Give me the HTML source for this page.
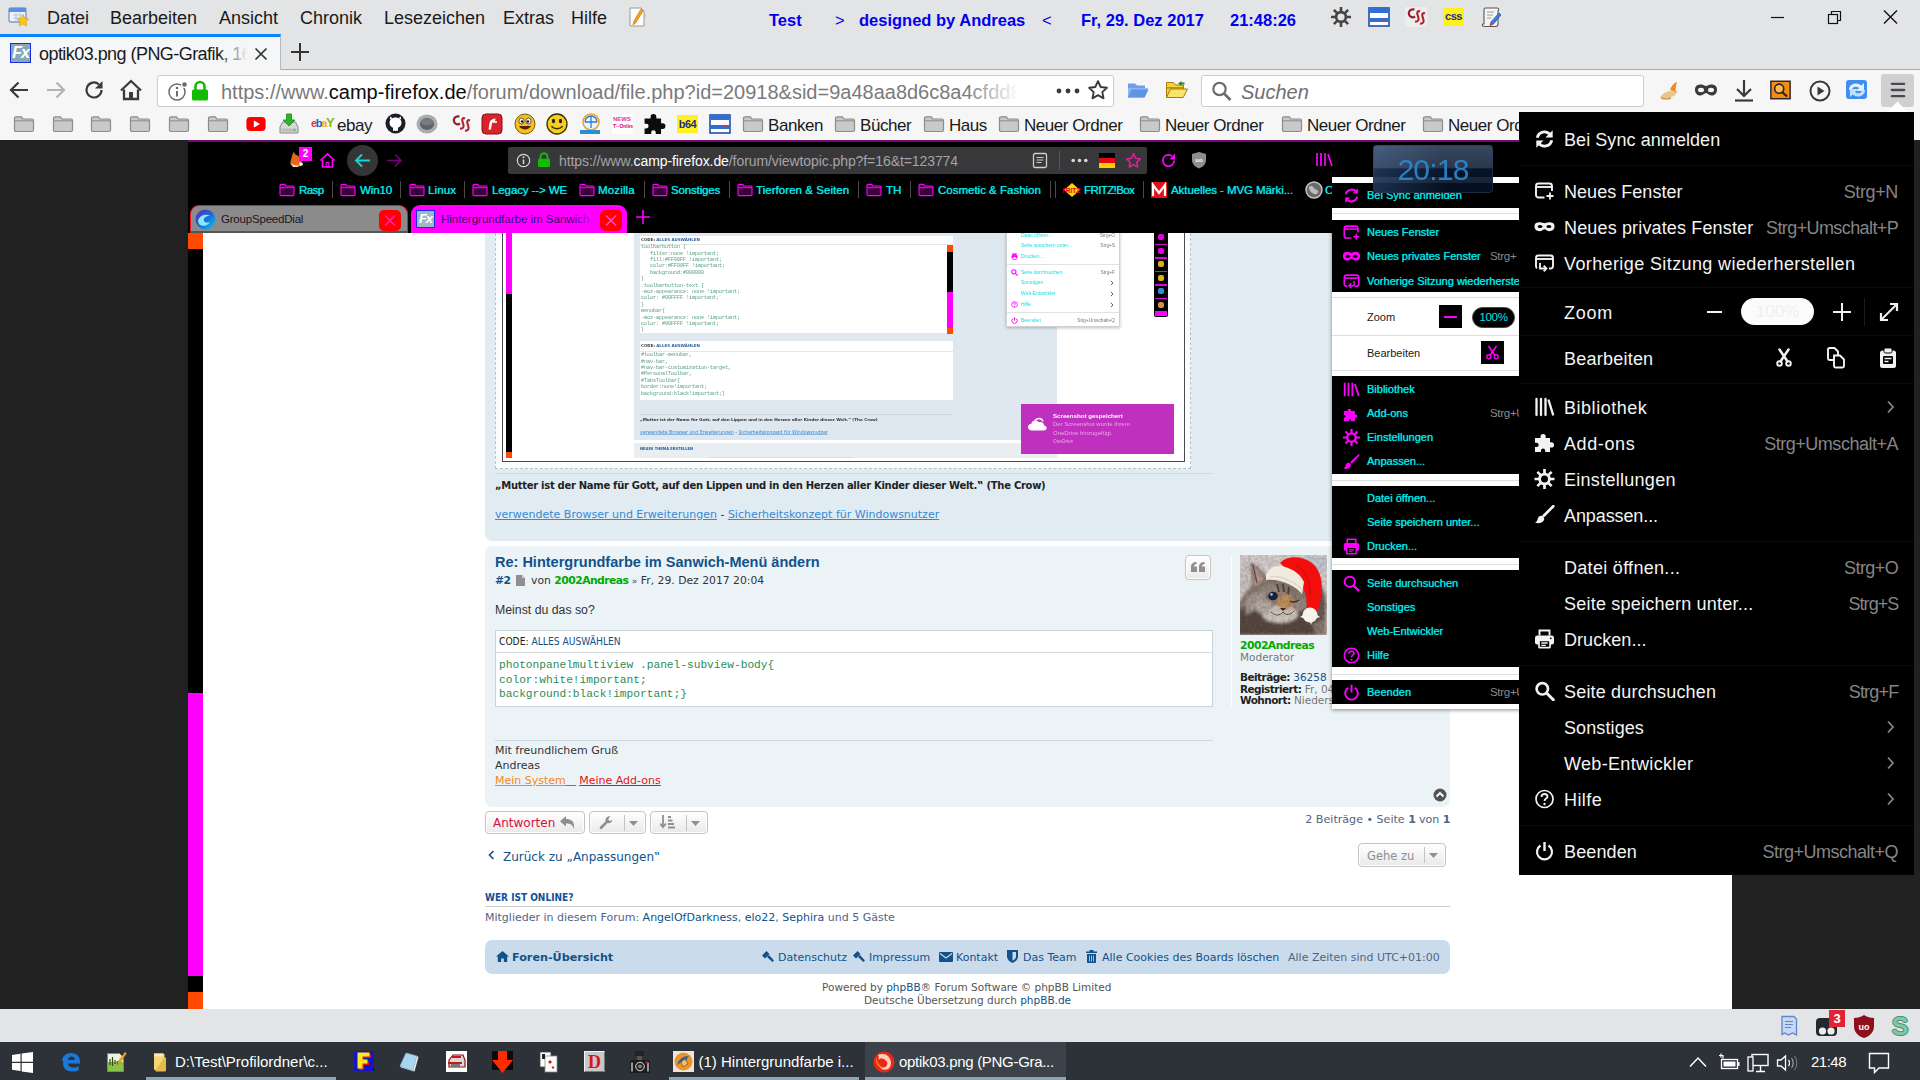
<!DOCTYPE html>
<html lang="de"><head><meta charset="utf-8"><title>optik03.png</title>
<style>
*{box-sizing:border-box;margin:0;padding:0}
html,body{width:1920px;height:1080px;overflow:hidden;background:#212121;font-family:"Liberation Sans",sans-serif;}
.abs{position:absolute}
#root{position:absolute;left:0;top:0;width:1920px;height:1080px;overflow:hidden}
#menubar{position:absolute;left:0;top:0;width:1920px;height:70px;background:#e3e4e6}
#menubar .mi{position:absolute;top:7px;font-size:18px;color:#1a1a1a;line-height:22px;white-space:nowrap}
#menubar .bl{position:absolute;top:9px;font-size:16.500px;font-weight:bold;color:#0000f0;line-height:22px;white-space:nowrap}
#tab{position:absolute;left:0;top:34px;width:281px;height:36px;background:#f5f6f7;border-top:3px solid #0a84ff;border-right:1px solid #b9b9bb}
#tabline{position:absolute;left:281px;top:69px;width:1639px;height:1px;background:#a9a9ab}
#navbar{position:absolute;left:0;top:70px;width:1920px;height:70px;background:#f6f6f7}
.box{position:absolute;background:#fff;border:1px solid #cdcdcf;border-radius:3px}
.bm{position:absolute;top:114px;font-size:17px;letter-spacing:-.45px;line-height:22px;color:#1a1a1a;white-space:nowrap}
#content{position:absolute;left:0;top:140px;width:1920px;height:869px;background:#212121}
#img{position:absolute;left:188px;top:140px;width:1544px;height:869px;background:#fff;overflow:hidden}
#addonbar{position:absolute;left:0;top:1009px;width:1920px;height:33px;background:#e3e4e6}
#taskbar{position:absolute;left:0;top:1042px;width:1920px;height:38px;background:#2c3237}
#taskbar svg{margin-top:1px}
#popup{position:absolute;left:1519px;top:112px;width:395px;height:763px;background:#000}
</style></head><body><div id="root">
<div id="menubar">
<svg class="abs" style="left:8px;top:7px" width="22" height="20" viewBox="0 0 22 20"><rect x="1" y="1" width="17" height="14" rx="1.5" fill="#eef3fb" stroke="#7d9bd0" stroke-width="1.4"/><rect x="1" y="1" width="17" height="4" fill="#5b8fe0"/><path d="M5 8h10M5 11h10M8 6v8M12 6v8" stroke="#b9c6dc" stroke-width="1"/><path d="M15 7.5l1.9 3.9 4.1.5-3 2.9.8 4.2-3.8-2-3.8 2 .8-4.2-3-2.9 4.1-.5z" fill="#f7c71d" stroke="#e09a10" stroke-width=".6"/></svg>
<span class="mi" style="left:47px">Datei</span>
<span class="mi" style="left:110px">Bearbeiten</span>
<span class="mi" style="left:219px">Ansicht</span>
<span class="mi" style="left:300px">Chronik</span>
<span class="mi" style="left:384px">Lesezeichen</span>
<span class="mi" style="left:503px">Extras</span>
<span class="mi" style="left:571px">Hilfe</span>
<svg class="abs" style="left:627px;top:6px" width="22" height="22" viewBox="0 0 22 22"><path d="M3 2h11l3 3v15H3z" fill="#fbfbfb" stroke="#9a9a9a" stroke-width="1"/><path d="M14 3L7 15l-1 4 3-2.500L16 5z" fill="#f5a21a" stroke="#c47a0a" stroke-width=".7"/><path d="M17 8c2 .5 2 2.500 .5 3" stroke="#bbb" fill="none"/></svg>
<span class="bl" style="left:769px">Test</span>
<span class="bl" style="left:835px;font-weight:normal">&gt;</span>
<span class="bl" style="left:859px">designed by Andreas</span>
<span class="bl" style="left:1042px;font-weight:normal">&lt;</span>
<span class="bl" style="left:1081px">Fr, 29. Dez 2017</span>
<span class="bl" style="left:1230px">21:48:26</span>
<svg class="abs" style="left:1330px;top:6px" width="22" height="22" viewBox="0 0 22 22"><g stroke="#444" stroke-width="2.600" stroke-linecap="butt"><path d="M11 1v20M1 11h20M3.900 3.900l14.200 14.200M18.100 3.900L3.900 18.100"/></g><circle cx="11" cy="11" r="6.200" fill="#444"/><circle cx="11" cy="11" r="3.600" fill="#e3e4e6"/></svg>
<svg class="abs" style="left:1368px;top:7px" width="22" height="20" viewBox="0 0 22 20"><rect x="1" y="1" width="20" height="18" fill="#fff" stroke="#1f4fa8" stroke-width="1.600"/><rect x="1" y="1" width="20" height="5" fill="#2f6fd6"/><rect x="1" y="11" width="20" height="4" fill="#2f6fd6"/><path d="M14 13h4" stroke="#e33" stroke-width="1.400"/></svg>
<svg class="abs" style="left:1405px;top:6px" width="22" height="22" viewBox="0 0 22 22"><rect x="0" y="1" width="22" height="20" fill="#ededed"/><path d="M9.500 3.500C5.500 2.500 3 5.500 4 8.500c1 3 4 3.500 6 2" fill="none" stroke="#9b1c2e" stroke-width="2.300"/><path d="M15 5.500c-2-1-3.500.5-2.500 3l1 3.500c.5 2.500-1 4-3.500 3.500M20 7.500c-2-1-3.500.5-2.500 3l1 3.500c.5 2.500-1 4-3.500 3.500" fill="none" stroke="#b0212f" stroke-width="2.100"/></svg>
<div class="abs" style="left:1443px;top:8px;width:21px;height:18px;background:#fff21c;font-size:11px;font-weight:bold;line-height:16px;text-align:center;color:#1f2a8a;letter-spacing:-.5px">css</div>
<svg class="abs" style="left:1480px;top:6px" width="23" height="22" viewBox="0 0 23 22"><path d="M5 2h12c2 0 2 2 1 3v13c0 2-1 2.500-2 2.500H4c-2 0-2-2-1-2.500h1V4c0-1 0-2 1-2z" fill="#f4f4f4" stroke="#555" stroke-width="1.100"/><path d="M7 6h7M7 9h6M7 12h4" stroke="#999" stroke-width="1"/><path d="M19 7l-8 9-1 3.500 3.300-1.300L21 9z" fill="#3b7de0" stroke="#23479a" stroke-width=".7"/><path d="M10 19.500l1-3.500 2.300 2.200z" fill="#e63b2e"/></svg>
<svg class="abs" style="left:1770px;top:9px" width="130" height="18" viewBox="0 0 130 18"><path d="M1 8.500h13" stroke="#111" stroke-width="1.200"/><rect x="58.500" y="5.500" width="9" height="9" fill="none" stroke="#111" stroke-width="1.200"/><path d="M61.500 5.500v-3h9v9h-3" fill="none" stroke="#111" stroke-width="1.200"/><path d="M114 1.500l13 13M127 1.500l-13 13" stroke="#111" stroke-width="1.400"/></svg>
</div>
<div id="tab">
<div class="abs" style="left:10px;top:6px;width:21px;height:20px;background:#86a9b4;border:1.500px solid #1a2be0;color:#fff;font-size:16px;font-style:italic;font-weight:bold;line-height:17px;text-align:center;letter-spacing:-1px;overflow:hidden">Fx</div>
<div class="abs" style="left:39px;top:5px;width:212px;height:24px;overflow:hidden;white-space:nowrap;font-size:18px;letter-spacing:-.55px;line-height:24px;color:#1a1a1a">optik03.png (PNG-Grafik, 1600</div>
<div class="abs" style="left:218px;top:5px;width:33px;height:24px;background:linear-gradient(90deg,rgba(245,246,247,0),#f5f6f7 90%)"></div>
<svg class="abs" style="left:254px;top:10px" width="14" height="14" viewBox="0 0 14 14"><path d="M1.500 1.500l11 11M12.500 1.500l-11 11" stroke="#333" stroke-width="1.700"/></svg>
</div>
<svg class="abs" style="left:290px;top:42px" width="20" height="20" viewBox="0 0 20 20"><path d="M10 1v18M1 10h18" stroke="#333" stroke-width="2"/></svg>
<div id="tabline"></div>
<div id="navbar">
<svg class="abs" style="left:8px;top:9px" width="22" height="22" viewBox="0 0 22 22"><path d="M20 11H3M10.500 3.500L3 11l7.500 7.500" fill="none" stroke="#3a3a3c" stroke-width="2.200"/></svg>
<svg class="abs" style="left:45px;top:9px" width="22" height="22" viewBox="0 0 22 22"><path d="M2 11h17M11.500 3.500L19 11l-7.500 7.500" fill="none" stroke="#b3b3b5" stroke-width="2.200"/></svg>
<svg class="abs" style="left:83px;top:9px" width="22" height="22" viewBox="0 0 22 22"><path d="M18.500 11a7.500 7.500 0 1 1-2.600-5.700" fill="none" stroke="#3a3a3c" stroke-width="2.200"/><path d="M19.500 2v7.500H12z" fill="#3a3a3c"/></svg>
<svg class="abs" style="left:119px;top:8px" width="24" height="24" viewBox="0 0 24 24"><path d="M2 12.500L12 3l10 9.500" fill="none" stroke="#3a3a3c" stroke-width="2.300"/><path d="M5 11.500V21h14v-9.500" fill="none" stroke="#3a3a3c" stroke-width="2.300"/><rect x="10" y="14" width="4" height="7" fill="#3a3a3c"/></svg>
<div class="box" style="left:157px;top:5px;width:957px;height:32px"></div>
<svg class="abs" style="left:167px;top:10px" width="22" height="22" viewBox="0 0 22 22"><circle cx="10" cy="12" r="8" fill="none" stroke="#6b6b6d" stroke-width="1.500"/><path d="M10 11v5.500" stroke="#6b6b6d" stroke-width="2"/><circle cx="10" cy="8" r="1.300" fill="#6b6b6d"/><circle cx="17.500" cy="4.500" r="3.500" fill="#fff"/><circle cx="17.500" cy="4.500" r="2.300" fill="#6b6b6d"/></svg>
<svg class="abs" style="left:191px;top:10px" width="18" height="22" viewBox="0 0 18 22"><path d="M4.500 10V6.500a4.500 4.500 0 0 1 9 0V10" fill="none" stroke="#12bc00" stroke-width="2.600"/><rect x="1" y="9.500" width="16" height="11" rx="1.500" fill="#12bc00"/></svg>
<div class="abs" style="left:221px;top:8px;width:800px;height:28px;overflow:hidden;white-space:nowrap;font-size:20px;line-height:28px;color:#7a7a7c">https://www.<span style="color:#0c0c0d">camp-firefox.de</span>/forum/download/file.php?id=20918&amp;sid=9a48aa8d6c8a4cfdd8ab</div>
<div class="abs" style="left:965px;top:8px;width:75px;height:28px;background:linear-gradient(90deg,rgba(255,255,255,0),#fff 72%)"></div>
<svg class="abs" style="left:1056px;top:18px" width="24" height="6" viewBox="0 0 24 6"><circle cx="3" cy="3" r="2.400" fill="#3a3a3c"/><circle cx="12" cy="3" r="2.400" fill="#3a3a3c"/><circle cx="21" cy="3" r="2.400" fill="#3a3a3c"/></svg>
<svg class="abs" style="left:1087px;top:9px" width="22" height="22" viewBox="0 0 22 22"><path d="M11 2.200l2.700 5.800 6.200.8-4.600 4.300 1.200 6.200-5.500-3.100-5.500 3.100 1.200-6.200L2.100 8.800l6.200-.8z" fill="none" stroke="#3a3a3c" stroke-width="1.900" stroke-linejoin="round"/></svg>
<svg class="abs" style="left:1127px;top:11px" width="22" height="18" viewBox="0 0 22 18"><path d="M1 2.500h7l2 2h8v3H1z" fill="#6f9fe6"/><path d="M1 16.500V7h17l3 0-3.500 9.500z" fill="#8fb8f3"/><path d="M1 16.500l3.500-8h17l-3.800 8z" fill="#5e93e6"/></svg>
<svg class="abs" style="left:1165px;top:10px" width="23" height="20" viewBox="0 0 23 20"><path d="M1.500 2.500h7l2 2.500h8v3h-17z" fill="#f6d23c" stroke="#a77c0c" stroke-width="1"/><path d="M1.500 17.500V8h17v2" fill="#f6d23c" stroke="#a77c0c" stroke-width="1"/><path d="M1.500 17.500l4-8.500h17l-4.300 8.500z" fill="#fbe36a" stroke="#a77c0c" stroke-width="1"/><path d="M13 3.500l3.500-2.500v1.600h3v1.800h-3v1.600z" fill="#2a8a2a"/></svg>
<div class="box" style="left:1201px;top:5px;width:443px;height:32px"></div>
<svg class="abs" style="left:1210px;top:10px" width="24" height="24" viewBox="0 0 24 24"><circle cx="9.500" cy="9" r="6.200" fill="none" stroke="#6d6d6f" stroke-width="2.200"/><path d="M14 13.500l6.500 6.500" stroke="#6d6d6f" stroke-width="2.600"/></svg>
<div class="abs" style="left:1241px;top:8px;font-size:20px;line-height:28px;font-style:italic;color:#6f6f71">Suchen</div>
<svg class="abs" style="left:1658px;top:10px" width="24" height="22" viewBox="0 0 24 22"><path d="M2 17c3-4 7-6 10-6s5 1 8 0c-2 4-6 7-11 7-3 0-5 0-7-1z" fill="#e9c58a"/><path d="M12 10c1-4 4-7 7-8-1 4-2 7-1 10z" fill="#f08a24"/><path d="M3 18c3 1 7 1 10 0" stroke="#c79a54" stroke-width="1.400" fill="none"/></svg>
<svg class="abs" style="left:1694px;top:13px" width="24" height="14" viewBox="0 0 24 14"><path d="M1 6.500C1 2.500 4 1.500 7 1.500c2.500 0 3.500 1.500 5 1.500s2.500-1.500 5-1.500c3 0 6 1 6 5s-2.500 6-5.500 6c-2.800 0-3.800-2.500-5.500-2.500S9.300 12.500 6.500 12.500C3.500 12.500 1 10.500 1 6.500z" fill="#3a3a3c"/><ellipse cx="7" cy="7" rx="3" ry="2.200" fill="#f6f6f7"/><ellipse cx="17" cy="7" rx="3" ry="2.200" fill="#f6f6f7"/></svg>
<svg class="abs" style="left:1733px;top:9px" width="22" height="24" viewBox="0 0 22 24"><path d="M11 1v15M4 10l7 7 7-7" fill="none" stroke="#3a3a3c" stroke-width="2.200"/><path d="M2 21.500h18" stroke="#3a3a3c" stroke-width="2.200"/></svg>
<svg class="abs" style="left:1770px;top:10px" width="21" height="20" viewBox="0 0 24 22"><rect x="1" y="1" width="22" height="20" fill="#f68a12" stroke="#222" stroke-width="1.600"/><circle cx="10.500" cy="9.500" r="5.200" fill="#ffb84d" stroke="#222" stroke-width="1.800"/><path d="M14 13.500l5.500 5" stroke="#222" stroke-width="2.400"/></svg>
<svg class="abs" style="left:1808px;top:9px" width="24" height="24" viewBox="0 0 24 24"><circle cx="12" cy="12" r="9.500" fill="none" stroke="#3a3a3c" stroke-width="2"/><path d="M9.500 7.500v9l7-4.500z" fill="#3a3a3c"/></svg>
<svg class="abs" style="left:1844px;top:8px" width="26" height="24" viewBox="0 0 26 24"><rect x="2" y="2" width="21" height="19" rx="3" fill="#3f8ff0"/><path d="M5 12c0-4 3-6.500 7-6.500 2 0 4 .7 5.300 2L20 5v8h-8l3-3c-1-.8-2-1.200-3.300-1.200C9.500 8.800 8 10.300 8 12z" fill="#dff0ff"/><path d="M21 12c0 4-3 6.500-7 6.500-2 0-4-.7-5.300-2L6 19v-8h8l-3 3c1 .8 2 1.200 3.300 1.200 2.200 0 3.700-1.500 3.700-3.200z" fill="#bfe0ff"/></svg>
<div class="abs" style="left:1881px;top:4px;width:33px;height:33px;background:#d0d0d2;border-radius:3px"></div>
<svg class="abs" style="left:1888px;top:10px" width="20" height="20" viewBox="0 0 20 20"><path d="M3.800 3.800h12.400M3.800 10h12.400M3.800 16.200h12.400" stroke="#4a4a4c" stroke-width="2.300" stroke-linecap="round"/></svg>
<svg class="abs" style="left:1886px;top:30.500px" width="24" height="12" viewBox="0 0 24 12"><path d="M0.500 12L11.500 0.500l11 11.500z" fill="#fff"/></svg>
<svg class="abs" style="left:13px;top:45px" width="22" height="18" viewBox="0 0 22 18"><path d="M1.500 3.500c0-1 .6-1.700 1.600-1.700h5.300l1.500 2.200h9c1 0 1.600.7 1.600 1.700v9.100c0 1-.6 1.700-1.600 1.700H3.100c-1 0-1.600-.7-1.600-1.700z" fill="#c9c9c9" stroke="#8c8c8c" stroke-width="1.200"/><path d="M1.500 5.800h19" stroke="#8c8c8c" stroke-width="1"/></svg>
<svg class="abs" style="left:52px;top:45px" width="22" height="18" viewBox="0 0 22 18"><path d="M1.500 3.500c0-1 .6-1.700 1.600-1.700h5.300l1.500 2.200h9c1 0 1.600.7 1.600 1.700v9.100c0 1-.6 1.700-1.600 1.700H3.100c-1 0-1.600-.7-1.600-1.700z" fill="#c9c9c9" stroke="#8c8c8c" stroke-width="1.200"/><path d="M1.500 5.800h19" stroke="#8c8c8c" stroke-width="1"/></svg>
<svg class="abs" style="left:90px;top:45px" width="22" height="18" viewBox="0 0 22 18"><path d="M1.500 3.500c0-1 .6-1.700 1.600-1.700h5.300l1.500 2.200h9c1 0 1.600.7 1.600 1.700v9.100c0 1-.6 1.700-1.600 1.700H3.100c-1 0-1.600-.7-1.600-1.700z" fill="#c9c9c9" stroke="#8c8c8c" stroke-width="1.200"/><path d="M1.500 5.800h19" stroke="#8c8c8c" stroke-width="1"/></svg>
<svg class="abs" style="left:129px;top:45px" width="22" height="18" viewBox="0 0 22 18"><path d="M1.500 3.500c0-1 .6-1.700 1.600-1.700h5.300l1.500 2.200h9c1 0 1.600.7 1.600 1.700v9.100c0 1-.6 1.700-1.600 1.700H3.100c-1 0-1.600-.7-1.600-1.700z" fill="#c9c9c9" stroke="#8c8c8c" stroke-width="1.200"/><path d="M1.500 5.800h19" stroke="#8c8c8c" stroke-width="1"/></svg>
<svg class="abs" style="left:168px;top:45px" width="22" height="18" viewBox="0 0 22 18"><path d="M1.500 3.500c0-1 .6-1.700 1.600-1.700h5.300l1.500 2.200h9c1 0 1.600.7 1.600 1.700v9.100c0 1-.6 1.700-1.600 1.700H3.100c-1 0-1.600-.7-1.600-1.700z" fill="#c9c9c9" stroke="#8c8c8c" stroke-width="1.200"/><path d="M1.500 5.800h19" stroke="#8c8c8c" stroke-width="1"/></svg>
<svg class="abs" style="left:207px;top:45px" width="22" height="18" viewBox="0 0 22 18"><path d="M1.500 3.500c0-1 .6-1.700 1.600-1.700h5.300l1.500 2.200h9c1 0 1.600.7 1.600 1.700v9.100c0 1-.6 1.700-1.600 1.700H3.100c-1 0-1.600-.7-1.600-1.700z" fill="#c9c9c9" stroke="#8c8c8c" stroke-width="1.200"/><path d="M1.500 5.800h19" stroke="#8c8c8c" stroke-width="1"/></svg>
<svg class="abs" style="left:246px;top:47px" width="20" height="14" viewBox="0 0 22 16"><rect x="0" y="0" width="22" height="16" rx="4.500" fill="#f00"/><path d="M8.500 4v8l7-4z" fill="#fff"/></svg>
<svg class="abs" style="left:278px;top:43px" width="22" height="22" viewBox="0 0 22 22"><path d="M2 14l2.500-5h13L20 14v6H2z" fill="#d8d8d8" stroke="#8a8a8a" stroke-width="1"/><rect x="3.500" y="15.500" width="15" height="3" fill="#bdbdbd"/><circle cx="16.500" cy="17" r="1" fill="#3c3"/><path d="M8.500 1h5v6h3.500L11 13 5 7h3.500z" fill="#2db52d" stroke="#178a17" stroke-width=".8"/></svg>
<div class="abs" style="left:311px;top:45px;width:24px;height:16px;font-size:11px;font-weight:bold;line-height:16px;letter-spacing:-1.300px;white-space:nowrap"><span style="color:#e53238">e</span><span style="color:#0064d2">b</span><span style="color:#f5af02">a</span><span style="color:#86b817;font-size:13px">Y</span></div>
<span class="bm" style="left:337px;top:45px">ebay</span>
<svg class="abs" style="left:385px;top:43px" width="21" height="21" viewBox="0 0 21 21"><circle cx="10.500" cy="10.500" r="10" fill="#1b1f23"/><path d="M10.500 4.500c-3.600 0-6 2.400-6 5.300 0 2.600 1.700 4.300 3.500 5v2.700c0 .5 5 .5 5 0v-2.700c1.800-.7 3.500-2.400 3.500-5 0-2.900-2.400-5.300-6-5.300z" fill="#fff"/><path d="M4.800 6.500l.3-3 2.700 1.700M16.200 6.500l-.3-3-2.700 1.700" fill="#fff"/></svg>
<svg class="abs" style="left:416px;top:44px" width="22" height="20" viewBox="0 0 22 20"><ellipse cx="11" cy="10" rx="10.500" ry="9.500" fill="#a9acb0"/><ellipse cx="11" cy="10" rx="7" ry="6" fill="#5e6166"/><ellipse cx="11" cy="8" rx="6" ry="3.500" fill="#777b80"/></svg>
<svg class="abs" style="left:450px;top:43px" width="22" height="22" viewBox="0 0 22 22"><path d="M9.500 3.500C5.500 2.500 3 5.500 4 8.500c1 3 4 3.500 6 2" fill="none" stroke="#9b1c2e" stroke-width="2.300"/><path d="M15 5.500c-2-1-3.500.5-2.500 3l1 3.500c.5 2.500-1 4-3.500 3.500M20 7.500c-2-1-3.500.5-2.500 3l1 3.500c.5 2.500-1 4-3.500 3.500" fill="none" stroke="#b0212f" stroke-width="2.100"/></svg>
<svg class="abs" style="left:481px;top:43px" width="22" height="22" viewBox="0 0 22 22"><rect x="1" y="1" width="20" height="20" rx="4" fill="#d8232a" stroke="#8a0f14" stroke-width="1"/><path d="M14.500 5.500c-3 0-5.500 1.500-6 4.500l-1 6.500h2.500l.8-5c.3-2 1.500-3 3.200-3z" fill="#fff"/><path d="M12 9h4" stroke="#fff" stroke-width="1.600"/></svg>
<svg class="abs" style="left:514px;top:43px" width="22" height="22" viewBox="0 0 22 22"><circle cx="11" cy="11" r="10" fill="#f2c21a" stroke="#7a5a00" stroke-width="1"/><ellipse cx="7.500" cy="8" rx="2.600" ry="3" fill="#fff" stroke="#333" stroke-width=".8"/><ellipse cx="14.500" cy="8" rx="2.600" ry="3" fill="#fff" stroke="#333" stroke-width=".8"/><circle cx="8" cy="8.500" r="1.200" fill="#111"/><circle cx="14" cy="8.500" r="1.200" fill="#111"/><path d="M5 13c2 4.500 10 4.500 12 0z" fill="#5a1d0a"/></svg>
<svg class="abs" style="left:546px;top:43px" width="22" height="22" viewBox="0 0 22 22"><circle cx="11" cy="11" r="10" fill="#f5cf1d" stroke="#3b2b00" stroke-width="1.300"/><ellipse cx="7.500" cy="8" rx="1.600" ry="2.300" fill="#222"/><ellipse cx="14.500" cy="8" rx="1.600" ry="2.300" fill="#222"/><path d="M5.500 13c2 3.500 9 3.500 11 0" fill="none" stroke="#3b2b00" stroke-width="1.500"/></svg>
<svg class="abs" style="left:579px;top:43px" width="22" height="22" viewBox="0 0 22 22"><circle cx="12" cy="9" r="8" fill="#eaf3fb" stroke="#f0a030" stroke-width="1.600"/><path d="M6 9a6 6 0 0 1 12 0M12 3v12M6 9h12" stroke="#2d7dc8" stroke-width="1.300" fill="none"/><rect x="1" y="17" width="20" height="4" fill="#2a8fd0"/></svg>
<div class="abs" style="left:612px;top:44px;width:21px;height:20px;background:#fdfdfd;font-size:6px;line-height:7px;color:#e03a8a;font-weight:bold;padding:2px 1px;overflow:hidden">NEWS<br><span style="color:#e20074;font-size:5px">T&#183;&#183;Online</span></div>
<svg class="abs" style="left:644px;top:43px" width="22" height="22" viewBox="0 0 20 20"><path d="M.5 5H6V3.600a2.600 2.600 0 1 1 5.200 0V5h4.300v4.300h1.400a2.600 2.600 0 1 1 0 5.200h-1.400V19h-4.800v-1.300a2.100 2.100 0 1 0-4.200 0V19h-6v-5h1.600a2.100 2.100 0 1 0 0-4.200H.5z" fill="#0c0c0c"/></svg>
<div class="abs" style="left:677px;top:45px;width:21px;height:18px;background:#fff21c;font-size:11px;font-weight:bold;line-height:18px;text-align:center;color:#1f2a8a;letter-spacing:-.5px">b64</div>
<svg class="abs" style="left:709px;top:44px" width="22" height="20" viewBox="0 0 22 20"><rect x="1" y="1" width="20" height="18" fill="#fff" stroke="#1f4fa8" stroke-width="1.600"/><rect x="1" y="1" width="20" height="5" fill="#2f6fd6"/><rect x="1" y="11" width="20" height="4" fill="#2f6fd6"/><path d="M14 13h4" stroke="#e33" stroke-width="1.400"/></svg>
<svg class="abs" style="left:742px;top:45px" width="22" height="18" viewBox="0 0 22 18"><path d="M1.500 3.500c0-1 .6-1.700 1.600-1.700h5.300l1.500 2.200h9c1 0 1.600.7 1.600 1.700v9.100c0 1-.6 1.700-1.600 1.700H3.100c-1 0-1.600-.7-1.600-1.700z" fill="#c9c9c9" stroke="#8c8c8c" stroke-width="1.200"/><path d="M1.500 5.800h19" stroke="#8c8c8c" stroke-width="1"/></svg><span class="bm" style="left:768px;top:45px">Banken</span>
<svg class="abs" style="left:834px;top:45px" width="22" height="18" viewBox="0 0 22 18"><path d="M1.500 3.500c0-1 .6-1.700 1.600-1.700h5.300l1.500 2.200h9c1 0 1.600.7 1.600 1.700v9.100c0 1-.6 1.700-1.600 1.700H3.100c-1 0-1.600-.7-1.600-1.700z" fill="#c9c9c9" stroke="#8c8c8c" stroke-width="1.200"/><path d="M1.500 5.800h19" stroke="#8c8c8c" stroke-width="1"/></svg><span class="bm" style="left:860px;top:45px">Bücher</span>
<svg class="abs" style="left:923px;top:45px" width="22" height="18" viewBox="0 0 22 18"><path d="M1.500 3.500c0-1 .6-1.700 1.600-1.700h5.300l1.500 2.200h9c1 0 1.600.7 1.600 1.700v9.100c0 1-.6 1.700-1.600 1.700H3.100c-1 0-1.600-.7-1.600-1.700z" fill="#c9c9c9" stroke="#8c8c8c" stroke-width="1.200"/><path d="M1.500 5.800h19" stroke="#8c8c8c" stroke-width="1"/></svg><span class="bm" style="left:949px;top:45px">Haus</span>
<svg class="abs" style="left:998px;top:45px" width="22" height="18" viewBox="0 0 22 18"><path d="M1.500 3.500c0-1 .6-1.700 1.600-1.700h5.300l1.500 2.200h9c1 0 1.600.7 1.600 1.700v9.100c0 1-.6 1.700-1.600 1.700H3.100c-1 0-1.600-.7-1.600-1.700z" fill="#c9c9c9" stroke="#8c8c8c" stroke-width="1.200"/><path d="M1.500 5.800h19" stroke="#8c8c8c" stroke-width="1"/></svg><span class="bm" style="left:1024px;top:45px">Neuer Ordner</span>
<svg class="abs" style="left:1139px;top:45px" width="22" height="18" viewBox="0 0 22 18"><path d="M1.500 3.500c0-1 .6-1.700 1.600-1.700h5.300l1.500 2.200h9c1 0 1.600.7 1.600 1.700v9.100c0 1-.6 1.700-1.600 1.700H3.100c-1 0-1.600-.7-1.600-1.700z" fill="#c9c9c9" stroke="#8c8c8c" stroke-width="1.200"/><path d="M1.500 5.800h19" stroke="#8c8c8c" stroke-width="1"/></svg><span class="bm" style="left:1165px;top:45px">Neuer Ordner</span>
<svg class="abs" style="left:1281px;top:45px" width="22" height="18" viewBox="0 0 22 18"><path d="M1.500 3.500c0-1 .6-1.700 1.600-1.700h5.300l1.500 2.200h9c1 0 1.600.7 1.600 1.700v9.100c0 1-.6 1.700-1.600 1.700H3.100c-1 0-1.600-.7-1.600-1.700z" fill="#c9c9c9" stroke="#8c8c8c" stroke-width="1.200"/><path d="M1.500 5.800h19" stroke="#8c8c8c" stroke-width="1"/></svg><span class="bm" style="left:1307px;top:45px">Neuer Ordner</span>
<svg class="abs" style="left:1422px;top:45px" width="22" height="18" viewBox="0 0 22 18"><path d="M1.500 3.500c0-1 .6-1.700 1.600-1.700h5.300l1.500 2.200h9c1 0 1.600.7 1.600 1.700v9.100c0 1-.6 1.700-1.600 1.700H3.100c-1 0-1.600-.7-1.600-1.700z" fill="#c9c9c9" stroke="#8c8c8c" stroke-width="1.200"/><path d="M1.500 5.800h19" stroke="#8c8c8c" stroke-width="1"/></svg><span class="bm" style="left:1448px;top:45px">Neuer Ordner</span>
</div>
<div id="content"></div>
<div id="img"><div class="abs" style="left:-188px;top:-140px;width:1920px;height:1080px">
<style>.ib{position:absolute;top:182px;font-size:11.500px;line-height:17px;color:#00e8e8;white-space:nowrap;text-shadow:0 0 .7px #00e8e8}</style>
<style>.pg{position:absolute;white-space:nowrap;font-family:"DejaVu Sans","Liberation Sans",sans-serif;font-size:11px;line-height:14px;color:#333}.pg{margin-top:1px}.pg b{font-weight:bold;letter-spacing:-.55px}.lk{color:#105289}.hr{position:absolute;height:1px;background:#cfd6dc}</style>
<div class="abs" style="left:202px;top:233px;width:1530px;height:776px;background:#fff"></div>
<div class="abs" style="left:485px;top:233px;width:965px;height:308px;background:#e1ebf2;border-radius:0 0 7px 7px"></div>
<div class="abs" style="left:495px;top:228px;width:696px;height:241px;background:#fbfcfd;border:1px dashed #b8c0c8"></div>
<style>.nt{position:absolute;white-space:nowrap;font-family:"DejaVu Sans",sans-serif;line-height:1;transform-origin:0 0}.nc{position:absolute;white-space:pre;font-family:"Liberation Mono",monospace;font-size:10px;line-height:12.800px;color:#4d9a78;transform:scale(.5);transform-origin:0 0}</style>
<div class="abs" style="left:502px;top:225px;width:683px;height:237px;background:#fff;border:1.300px solid #4a4a4a"></div>
<div class="abs" style="left:505.500px;top:233px;width:6.500px;height:219px;background:#000"></div><div class="abs" style="left:505.500px;top:233px;width:6.500px;height:61px;background:#ff00ff"></div><div class="abs" style="left:505.500px;top:452px;width:6.500px;height:6px;background:#ff4a00"></div>
<div class="abs" style="left:634px;top:233px;width:423px;height:207px;background:#dfe8f0"></div>
<div class="abs" style="left:634px;top:443px;width:423px;height:15px;background:#e9eef3"></div>
<div class="abs" style="left:640px;top:236px;width:313px;height:97px;background:#fff"></div><div class="abs" style="left:640px;top:244px;width:313px;height:1px;background:#e3e8ec"></div>
<div class="abs" style="left:640px;top:341px;width:313px;height:59px;background:#fff"></div><div class="abs" style="left:640px;top:351px;width:313px;height:1px;background:#e3e8ec"></div>
<span class="nt" style="left:641px;top:238px;font-size:8px;transform:scale(.5)"><span style="color:#333;font-weight:bold">CODE:</span> <span style="color:#2a5a9a;font-weight:bold">ALLES AUSWÄHLEN</span></span><span class="nt" style="left:641px;top:344px;font-size:8px;transform:scale(.5)"><span style="color:#333;font-weight:bold">CODE:</span> <span style="color:#2a5a9a;font-weight:bold">ALLES AUSWÄHLEN</span></span>
<div class="nc" style="left:641px;top:243.800px">toolbarbutton {
   filter:none !important;
   fill:#FF00FF !important;
   color:#FF00FF !important;
   background:#000000
}
.toolbarbutton-text {
-moz-appearance: none !important;
color: #00FFFF !important;
}
menubar{
-moz-appearance: none !important;
color: #00FFFF !important;
}</div>
<div class="nc" style="left:641px;top:352.300px">#toolbar-menubar,
#nav-bar,
#nav-bar-customization-target,
#PersonalToolbar,
#TabsToolbar{
border:none!important;
background:black!important;}</div>
<div class="abs" style="left:947px;top:245px;width:6px;height:89px;background:#000"></div><div class="abs" style="left:947px;top:245px;width:6px;height:7px;background:#ff4a00"></div><div class="abs" style="left:947px;top:292px;width:6px;height:36px;background:#ff00ff"></div><div class="abs" style="left:947px;top:328px;width:6px;height:6px;background:#ff4a00"></div>
<div class="abs" style="left:640px;top:414px;width:313px;height:1px;background:#cdd5db"></div>
<span class="nt" style="left:640px;top:417px;font-size:8.400px;font-weight:bold;color:#333;transform:scale(.5);letter-spacing:-.1px">„Mutter ist der Name für Gott, auf den Lippen und in den Herzen aller Kinder dieser Welt.‟ (The Crow)</span>
<span class="nt" style="left:640px;top:429.500px;font-size:9.300px;color:#555;transform:scale(.5)"><span style="color:#368ad2;text-decoration:underline">verwendete Browser und Erweiterungen</span> - <span style="color:#368ad2;text-decoration:underline">Sicherheitskonzept für Windowsnutzer</span></span>
<span class="nt" style="left:640px;top:447px;font-family:'DejaVu Sans Condensed',sans-serif;font-size:8px;font-weight:bold;color:#1a5a9a;transform:scale(.5)">NEUES THEMA ERSTELLEN</span>
<div class="abs" style="left:709px;top:457px;width:143px;height:1px;background:#dcdcdc"></div>
<div class="abs" style="left:1006px;top:225px;width:114px;height:102px;background:#fff;border:1px solid #d0d0d0;box-shadow:0 1px 3px rgba(0,0,0,.25)"></div>
<span class="nt" style="left:1021px;top:232.5px;font-family:'Liberation Sans',sans-serif;font-size:10px;color:#19dede;transform:scale(.5)">Datei öffnen...</span><span class="nt" style="left:1065px;width:100px;text-align:right;top:232.5px;font-family:'Liberation Sans',sans-serif;font-size:9.500px;color:#777;transform:scale(.5)">Strg+O</span>
<span class="nt" style="left:1021px;top:243.0px;font-family:'Liberation Sans',sans-serif;font-size:10px;color:#19dede;transform:scale(.5)">Seite speichern unter...</span><span class="nt" style="left:1065px;width:100px;text-align:right;top:243.0px;font-family:'Liberation Sans',sans-serif;font-size:9.500px;color:#777;transform:scale(.5)">Strg+S</span>
<span class="nt" style="left:1021px;top:253.5px;font-family:'Liberation Sans',sans-serif;font-size:10px;color:#19dede;transform:scale(.5)">Drucken...</span><svg class="abs" style="left:1011px;top:252.5px" width="7" height="7" viewBox="0 0 16 16"><rect x="3" y="1" width="10" height="5" fill="#ff00ff"/><rect x="1" y="5" width="14" height="7" rx="1.500" fill="#ff00ff"/><rect x="4" y="9" width="8" height="6" fill="#fff" stroke="#ff00ff" stroke-width="1.500"/></svg>
<div class="abs" style="left:1007px;top:264px;width:112px;height:1px;background:#e2e2e2"></div><span class="nt" style="left:1021px;top:269.5px;font-family:'Liberation Sans',sans-serif;font-size:10px;color:#19dede;transform:scale(.5)">Seite durchsuchen</span><span class="nt" style="left:1065px;width:100px;text-align:right;top:269.5px;font-family:'Liberation Sans',sans-serif;font-size:9.500px;color:#777;transform:scale(.5)">Strg+F</span><svg class="abs" style="left:1011px;top:268.5px" width="7" height="7" viewBox="0 0 16 16"><circle cx="6.500" cy="6.500" r="4.800" fill="none" stroke="#ff00ff" stroke-width="2.400"/><path d="M10 10l5 5" stroke="#ff00ff" stroke-width="2.800"/></svg>
<span class="nt" style="left:1021px;top:280.1px;font-family:'Liberation Sans',sans-serif;font-size:10px;color:#19dede;transform:scale(.5)">Sonstiges</span><svg class="abs" style="left:1110px;top:280.1px" width="4" height="6" viewBox="0 0 4 6"><path d="M.8.800L3 3 .8 5.200" fill="none" stroke="#555" stroke-width=".9"/></svg>
<span class="nt" style="left:1021px;top:290.5px;font-family:'Liberation Sans',sans-serif;font-size:10px;color:#19dede;transform:scale(.5)">Web-Entwickler</span><svg class="abs" style="left:1110px;top:290.5px" width="4" height="6" viewBox="0 0 4 6"><path d="M.8.800L3 3 .8 5.200" fill="none" stroke="#555" stroke-width=".9"/></svg>
<span class="nt" style="left:1021px;top:301.5px;font-family:'Liberation Sans',sans-serif;font-size:10px;color:#19dede;transform:scale(.5)">Hilfe</span><svg class="abs" style="left:1110px;top:301.5px" width="4" height="6" viewBox="0 0 4 6"><path d="M.8.800L3 3 .8 5.200" fill="none" stroke="#555" stroke-width=".9"/></svg><svg class="abs" style="left:1011px;top:300.5px" width="7" height="7" viewBox="0 0 16 16"><circle cx="8" cy="8" r="6.500" fill="none" stroke="#ff00ff" stroke-width="1.800"/><path d="M5.600 6.400c0-1.600 1-2.400 2.400-2.400s2.400.8 2.400 2.100c0 1.600-2.400 1.600-2.400 3.500" fill="none" stroke="#ff00ff" stroke-width="1.800"/><circle cx="8" cy="12" r="1.100" fill="#ff00ff"/></svg>
<div class="abs" style="left:1007px;top:311.500px;width:112px;height:1px;background:#e2e2e2"></div><span class="nt" style="left:1021px;top:317.5px;font-family:'Liberation Sans',sans-serif;font-size:10px;color:#19dede;transform:scale(.5)">Beenden</span><span class="nt" style="left:1065px;width:100px;text-align:right;top:317.5px;font-family:'Liberation Sans',sans-serif;font-size:9.500px;color:#777;transform:scale(.5)">Strg+Umschalt+Q</span><svg class="abs" style="left:1011px;top:316.5px" width="7" height="7" viewBox="0 0 16 16"><path d="M4.800 3.600a6 6 0 1 0 6.400 0" fill="none" stroke="#ff00ff" stroke-width="2.200"/><path d="M8 .8v7.200" stroke="#ff00ff" stroke-width="2.300"/></svg>
<div class="abs" style="left:1154px;top:233px;width:14px;height:84px;background:#000;border-radius:0 0 2px 2px"></div><div class="abs" style="left:1155px;top:311px;width:12px;height:5px;background:#ff00ff"></div><div class="abs" style="left:1158px;top:234px;width:6px;height:6px;background:#ff00ff;border-radius:2px;opacity:.9"></div><div class="abs" style="left:1158px;top:247.5px;width:6px;height:6px;background:#ff00ff;border-radius:2px;opacity:.9"></div><div class="abs" style="left:1155px;top:243.5px;width:12px;height:1.500px;background:#e000e0"></div><div class="abs" style="left:1158px;top:261px;width:6px;height:6px;background:#f5c518;border-radius:2px;opacity:.9"></div><div class="abs" style="left:1155px;top:257px;width:12px;height:1.500px;background:#e000e0"></div><div class="abs" style="left:1158px;top:274.5px;width:6px;height:6px;background:#f5c518;border-radius:2px;opacity:.9"></div><div class="abs" style="left:1155px;top:270.5px;width:12px;height:1.500px;background:#e000e0"></div><div class="abs" style="left:1158px;top:288px;width:6px;height:6px;background:#3a9af0;border-radius:2px;opacity:.9"></div><div class="abs" style="left:1155px;top:284px;width:12px;height:1.500px;background:#e000e0"></div><div class="abs" style="left:1158px;top:301.5px;width:6px;height:6px;background:#e8a050;border-radius:2px;opacity:.9"></div><div class="abs" style="left:1155px;top:297.5px;width:12px;height:1.500px;background:#e000e0"></div>
<div class="abs" style="left:1020.500px;top:403.500px;width:153px;height:50px;background:#bf30bf"></div>
<svg class="abs" style="left:1027px;top:416px" width="21" height="16" viewBox="0 0 21 16"><path d="M5 14.500c-2.500 0-4-1.500-4-3.500s1.500-3.300 3.300-3.300c.5-2 2.200-3.200 4-3.200 1.500 0 2.700.7 3.500 1.800.5-.2 1-.3 1.600-.3 2 0 3.600 1.500 3.700 3.500 1.500.2 2.600 1.300 2.600 2.600 0 1.500-1.200 2.400-2.800 2.400z" fill="#fff"/><path d="M7.500 5.500C8.500 3.500 10 2.500 12 2.500c2 0 3.500 1.300 4 3" fill="none" stroke="#fff" stroke-width="1.300"/></svg>
<span class="nt" style="left:1053px;top:412.500px;font-family:'Liberation Sans',sans-serif;font-size:12.300px;font-weight:bold;color:#fff;transform:scale(.5)">Screenshot gespeichert</span><span class="nt" style="left:1053px;top:421px;font-family:'Liberation Sans',sans-serif;font-size:12px;color:#e6a8e6;transform:scale(.5)">Der Screenshot wurde Ihrem</span><span class="nt" style="left:1053px;top:429.500px;font-family:'Liberation Sans',sans-serif;font-size:12px;color:#e6a8e6;transform:scale(.5)">OneDrive hinzugefügt.</span><span class="nt" style="left:1053px;top:439px;font-family:'Liberation Sans',sans-serif;font-size:9.500px;color:#e6a8e6;transform:scale(.5)">OneDrive</span>

<div class="hr" style="left:495px;top:473px;width:718px"></div>
<span class="pg" style="left:495px;top:478px;font-size:10px;letter-spacing:-.29px;font-weight:bold;color:#222">„Mutter ist der Name für Gott, auf den Lippen und in den Herzen aller Kinder dieser Welt.‟ (The Crow)</span>
<span class="pg" style="left:495px;top:507px;color:#333"><span style="color:#368ad2;text-decoration:underline">verwendete Browser und Erweiterungen</span> - <span style="color:#368ad2;text-decoration:underline">Sicherheitskonzept für Windowsnutzer</span></span>
<div class="abs" style="left:485px;top:546px;width:965px;height:261px;background:#ecf3f7;border-radius:7px"></div>
<span class="pg" style="left:495px;top:552px;font-family:'Liberation Sans',sans-serif;font-weight:bold;font-size:14.500px;line-height:18px;color:#105289">Re: Hintergrundfarbe im Sanwich-Menü ändern</span>
<span class="pg" style="left:495px;top:573px;font-size:10.800px"><b style="color:#105289">#2</b></span>
<svg class="abs" style="left:516px;top:575px" width="9" height="11" viewBox="0 0 9 11"><path d="M0 0h6l3 3v8H0z" fill="#8f8f8f"/><path d="M6 0v3h3z" fill="#d0d0d0"/></svg>
<span class="pg" style="left:531px;top:573px;font-size:10.800px">von <b style="color:#00aa00">2002Andreas</b> <span style="color:#105289;font-size:9px">»</span> Fr, 29. Dez 2017 20:04</span>
<span class="pg" style="left:495px;top:601px;font-family:'Liberation Sans',sans-serif;font-size:12.300px;line-height:16px;color:#333">Meinst du das so?</span>
<div class="abs" style="left:495px;top:630px;width:718px;height:77px;background:#fff;border:1px solid #c9d2d8"></div>
<div class="hr" style="left:496px;top:652px;width:716px;background:#d4dbe0"></div>
<span class="pg" style="left:499px;top:634px;font-family:'DejaVu Sans Condensed',sans-serif;font-size:10.200px;color:#222">CODE: <span style="color:#105289">ALLES AUSWÄHLEN</span></span>
<span class="pg" style="left:499px;top:657.0px;font-family:'Liberation Mono',monospace;font-size:11.200px;color:#2e8b57">photonpanelmultiview .panel-subview-body{</span>
<span class="pg" style="left:499px;top:671.5px;font-family:'Liberation Mono',monospace;font-size:11.200px;color:#2e8b57">color:white!important;</span>
<span class="pg" style="left:499px;top:686.0px;font-family:'Liberation Mono',monospace;font-size:11.200px;color:#2e8b57">background:black!important;}</span>
<div class="hr" style="left:495px;top:740px;width:718px"></div>
<span class="pg" style="left:495px;top:743px">Mit freundlichem Gruß</span>
<span class="pg" style="left:495px;top:758px">Andreas</span>
<span class="pg" style="left:495px;top:773px"><span style="color:#f08a1c;text-decoration:underline">Mein System</span><span style="color:#368ad2;text-decoration:underline">&nbsp;&nbsp;&nbsp;</span><span style="font-size:9px"> </span> <span style="color:#e0141e;text-decoration:underline">Meine Add-ons</span></span>
<div class="abs" style="left:1185px;top:555px;width:26px;height:25px;background:linear-gradient(#fff,#e9e9e9);border:1px solid #c7c3bf;border-radius:4px;box-shadow:0 0 0 1px #fff inset"></div>
<svg class="abs" style="left:1191px;top:562px" width="14" height="11" viewBox="0 0 14 11"><path d="M0 5c0-3 2-5 5.500-5v2C4 2 3 3 3 4.500h3V10H0zM8 5c0-3 2-5 5.500-5v2C12 2 11 3 11 4.500h3V10H8z" fill="#8f8f8f"/></svg>
<div class="abs" style="left:1231px;top:555px;width:1px;height:151px;background:#fff"></div>
<svg class="abs" style="left:1240px;top:555px" width="87" height="80" viewBox="0 0 87 80"><defs><filter id="bl" x="-10%" y="-10%" width="120%" height="120%"><feGaussianBlur stdDeviation="1.600"/></filter><filter id="bl2"><feGaussianBlur stdDeviation=".55"/></filter><filter id="fur" x="0" y="0" width="100%" height="100%"><feTurbulence type="fractalNoise" baseFrequency=".35" numOctaves="2" seed="4" result="n"/><feColorMatrix in="n" type="matrix" values="0 0 0 0 0  0 0 0 0 0  0 0 0 0 0  .9 0 0 0 -.25"/><feComposite in2="SourceGraphic" operator="in"/></filter><clipPath id="avc"><rect width="87" height="80"/></clipPath></defs><g clip-path="url(#avc)"><rect width="87" height="80" fill="#d6cfce"/><g filter="url(#bl)"><ellipse cx="72" cy="10" rx="16" ry="10" fill="#c6c8d4"/><ellipse cx="5" cy="22" rx="8" ry="16" fill="#cfc6c4"/><path d="M-2 80V50C3 40 8 34 12 30L10 7c7 3 13 9 18 16 8-3 20-3 30 2 6 4 12 8 14 16 6 4 12 10 14 18v21z" fill="#8a7a70"/><path d="M-2 80V58c6-7 14-9 22-7 10 9 30 10 46 1l10 28z" fill="#5a4a42"/><path d="M6 44c6-6 14-8 20-6l-2 14c-6 2-12 4-18 8z" fill="#a89c94"/><ellipse cx="40" cy="59" rx="18" ry="9" fill="#d4cac2"/><ellipse cx="24" cy="52" rx="9" ry="7" fill="#b8aca4"/><ellipse cx="45" cy="47" rx="8" ry="8" fill="#c2905e"/><path d="M13 11c4 3 8 8 11 13l-9 8z" fill="#b89890"/><ellipse cx="31" cy="35" rx="10" ry="5" fill="#9a8a80"/><path d="M78 28c8 8 10 22 6 36l-12 6z" fill="#6a5a54"/><ellipse cx="60" cy="50" rx="7" ry="6" fill="#9a8c84"/></g><rect width="87" height="80" fill="#3a2e28" opacity=".35" filter="url(#fur)"/><g filter="url(#bl2)"><path d="M40 8C48 0 62 1 72 8c10 8 12 24 8 40-1 6-3 10-6 12l-8-4c2-10 0-20-6-28z" fill="#f40e0e"/><path d="M56 10c8 4 14 14 14 30" fill="none" stroke="#c80808" stroke-width="2" opacity=".5"/><path d="M26 20c2-6 8-9 14-9 10 1 20 7 24 16l-2 12c-6-8-22-16-36-14z" fill="#f1ebdd"/><path d="M30 22c8-2 22 3 32 12" fill="none" stroke="#d8cdb8" stroke-width="1.500" opacity=".7"/><circle cx="70" cy="60" r="7.500" fill="#f6f3ea"/><path d="M63 60l-3 2 3 1zM77 60l3 2-3 1zM70 67l1 3 1-3z" fill="#f6f3ea"/><ellipse cx="33" cy="41" rx="4.800" ry="4.300" fill="#16233a"/><circle cx="31.500" cy="39.500" r="1.400" fill="#8fb0d8"/><path d="M50 46c3 2 6 1 9-1" fill="none" stroke="#3a2a24" stroke-width="1.400"/><path d="M40 53h6l-3 3z" fill="#3a2420"/><path d="M31 57c4 4 9 4 12 0 3 4 8 3 11-1" fill="none" stroke="#5a4a44" stroke-width="1"/><path d="M37 29l2 8M43 29l1 8M49 32l-1 7" stroke="#4a3e38" stroke-width="1.800"/><path d="M13 10l4 18" stroke="#5a4a44" stroke-width="1.200"/></g></g></svg>

<span class="pg" style="left:1240px;top:638px;font-size:10.800px"><b style="color:#00aa00">2002Andreas</b></span>
<span class="pg" style="left:1240px;top:649px;font-size:10.500px;color:#777">Moderator</span>
<span class="pg" style="left:1240px;top:671px;font-size:10.500px;line-height:11.500px;color:#777"><b style="color:#222">Beiträge:</b> <span class="lk">36258</span><br><b style="color:#222">Registriert:</b> Fr, 04. Jan 2002<br><b style="color:#222">Wohnort:</b> Niedersachsen</span>
<svg class="abs" style="left:1433px;top:788px" width="14" height="14" viewBox="0 0 14 14"><circle cx="7" cy="7" r="6.500" fill="#555"/><path d="M3.500 8.500L7 5l3.500 3.500" fill="none" stroke="#fff" stroke-width="1.800"/></svg>
<div class="abs" style="left:485px;top:811px;width:100px;height:23px;background:linear-gradient(#fff,#e9e9e9);border:1px solid #c7c3bf;border-radius:4px;box-shadow:0 0 0 1px #fff inset"></div>
<span class="pg" style="left:493px;top:815px;font-size:12px;line-height:15px;color:#d31141">Antworten</span>
<svg class="abs" style="left:560px;top:816px" width="15" height="13" viewBox="0 0 15 13"><path d="M6 0v3c5 0 8 2 8 7 0 1-.3 2-.8 2.800C13 9 11 7.500 6 7.500v3L0 5.200z" fill="#8f8f8f"/></svg>
<div class="abs" style="left:589px;top:811px;width:57px;height:23px;background:linear-gradient(#fff,#e9e9e9);border:1px solid #c7c3bf;border-radius:4px;box-shadow:0 0 0 1px #fff inset"></div>
<svg class="abs" style="left:599px;top:816px" width="14" height="14" viewBox="0 0 14 14"><path d="M13.500 3.500a3.800 3.800 0 0 1-5 3.600L3 12.700a1.300 1.300 0 0 1-1.900-1.900L6.700 5.300a3.800 3.800 0 0 1 4.800-4.800L9.300 2.800l.5 1.800 1.800.5z" fill="#8f8f8f"/></svg>
<div class="abs" style="left:624px;top:815px;width:1px;height:16px;background:#c7c3bf"></div><svg class="abs" style="left:629px;top:821px" width="9" height="5" viewBox="0 0 9 5"><path d="M0 0h9L4.500 5z" fill="#8f8f8f"/></svg>
<div class="abs" style="left:650px;top:811px;width:58px;height:23px;background:linear-gradient(#fff,#e9e9e9);border:1px solid #c7c3bf;border-radius:4px;box-shadow:0 0 0 1px #fff inset"></div>
<svg class="abs" style="left:660px;top:815px" width="15" height="15" viewBox="0 0 15 15"><path d="M3 0v11M0 8.500l3 3.500 3-3.500" fill="none" stroke="#8f8f8f" stroke-width="1.800"/><path d="M8 2h3M8 5.500h4.500M8 9h6M8 12.500h7" stroke="#8f8f8f" stroke-width="1.800"/></svg>
<div class="abs" style="left:686px;top:815px;width:1px;height:16px;background:#c7c3bf"></div><svg class="abs" style="left:691px;top:821px" width="9" height="5" viewBox="0 0 9 5"><path d="M0 0h9L4.500 5z" fill="#8f8f8f"/></svg>
<span class="pg" style="right:470px;top:812px;color:#536482;font-size:11.100px">2 Beiträge • Seite <b>1</b> von <b>1</b></span>
<svg class="abs" style="left:488px;top:850px" width="7" height="10" viewBox="0 0 7 10"><path d="M5.500 1L1.500 5l4 4" fill="none" stroke="#105289" stroke-width="1.600"/></svg>
<span class="pg lk" style="left:503px;top:848px;font-size:12px;line-height:16px">Zurück zu „Anpassungen‟</span>
<div class="abs" style="left:1358px;top:843px;width:88px;height:24px;background:linear-gradient(#fff,#e9e9e9);border:1px solid #c7c3bf;border-radius:4px;box-shadow:0 0 0 1px #fff inset"></div>
<span class="pg" style="left:1367px;top:848px;font-size:11.500px;color:#8f8f8f">Gehe zu</span>
<div class="abs" style="left:1424px;top:847px;width:1px;height:16px;background:#c7c3bf"></div><svg class="abs" style="left:1429px;top:853px" width="9" height="5" viewBox="0 0 9 5"><path d="M0 0h9L4.500 5z" fill="#8f8f8f"/></svg>
<span class="pg" style="left:485px;top:890px;font-family:'DejaVu Sans Condensed',sans-serif;font-size:10px;font-weight:bold;color:#115098">WER IST ONLINE?</span>
<div class="hr" style="left:485px;top:906px;width:965px;background:#ccc"></div>
<span class="pg" style="left:485px;top:910px;color:#536482">Mitglieder in diesem Forum: <span class="lk">AngelOfDarkness</span>, <span class="lk">elo22</span>, <span class="lk">Sephira</span> und 5 Gäste</span>
<div class="abs" style="left:485px;top:940px;width:965px;height:34px;background:#cadceb;border-radius:7px"></div>
<svg class="abs" style="left:496px;top:951px" width="13" height="11" viewBox="0 0 13 11"><path d="M6.500 0L0 5.500h1.800V11h3.400V7.500h2.600V11h3.400V5.500H13z" fill="#105289"/></svg>
<span class="pg lk" style="left:512px;top:950px;font-weight:bold;font-size:11.200px">Foren-Übersicht</span>
<svg class="abs" style="left:761px;top:950px" width="13" height="13" viewBox="0 0 13 13"><path d="M1 5.500L5.500 1l3 3L4 8.500zM6 7l2-2 5 5.500-1.500 1.500z" fill="#105289"/></svg><span class="pg lk" style="left:778px;top:950px">Datenschutz</span>
<svg class="abs" style="left:852px;top:950px" width="13" height="13" viewBox="0 0 13 13"><path d="M1 5.500L5.500 1l3 3L4 8.500zM6 7l2-2 5 5.500-1.500 1.500z" fill="#105289"/></svg><span class="pg lk" style="left:869px;top:950px">Impressum</span>
<svg class="abs" style="left:939px;top:952px" width="14" height="10" viewBox="0 0 14 10"><rect width="14" height="10" rx="1" fill="#105289"/><path d="M1 1.500l6 4.500 6-4.500" fill="none" stroke="#cadceb" stroke-width="1.200"/></svg><span class="pg lk" style="left:956px;top:950px">Kontakt</span>
<svg class="abs" style="left:1007px;top:950px" width="11" height="13" viewBox="0 0 11 13"><path d="M0 0h11v6.500c0 3-2.500 5.200-5.500 6.500C2.500 11.700 0 9.500 0 6.500z" fill="#105289"/><path d="M5.500 2h3.500v4.500c0 1.800-1.500 3.200-3.500 4.200z" fill="#cadceb"/></svg><span class="pg lk" style="left:1023px;top:950px">Das Team</span>
<svg class="abs" style="left:1086px;top:950px" width="11" height="13" viewBox="0 0 11 13"><path d="M3.500 0h4v1.500H11V3H0V1.500h3.500zM1 4h9v8c0 .6-.4 1-1 1H2c-.6 0-1-.4-1-1z" fill="#105289"/><path d="M3.500 5.500v6M5.500 5.500v6M7.500 5.500v6" stroke="#cadceb" stroke-width=".8"/></svg><span class="pg lk" style="left:1102px;top:950px">Alle Cookies des Boards löschen</span>
<span class="pg" style="left:1288px;top:950px;color:#536482">Alle Zeiten sind <span>UTC+01:00</span></span>
<span class="pg" style="left:822px;top:979px;font-size:10.500px;color:#555">Powered by <span class="lk">phpBB</span>® Forum Software © phpBB Limited</span>
<span class="pg" style="left:864px;top:992px;font-size:10.500px;color:#555">Deutsche Übersetzung durch <span class="lk">phpBB.de</span></span>

<div class="abs" style="left:188px;top:140px;width:1544px;height:93px;background:#000"></div>
<div class="abs" style="left:188px;top:140px;width:1544px;height:2px;background:#720a72"></div>
<svg class="abs" style="left:288px;top:150px" width="18" height="19" viewBox="0 0 18 19"><path d="M4 6l1.500-4 2.500 3c2 0 4 2 4 5 2 1 3 3 2 5-2 2-7 3-10 1-2-1-2-4-1-6z" fill="#e8661a"/><path d="M3 12c1 3 5 4 8 3l-2 2H5z" fill="#f3e6d8"/><path d="M11 13c2-1 4 0 4 2l-3 1z" fill="#fff"/></svg>
<div class="abs" style="left:299px;top:147px;width:13px;height:14px;background:#ff00ff;color:#fff;font-size:10px;font-weight:bold;line-height:14px;text-align:center">2</div>
<svg class="abs" style="left:319px;top:152px" width="17" height="17" viewBox="0 0 17 17"><path d="M1.500 8.500l7-6.500 7 6.500" fill="none" stroke="#ff00ff" stroke-width="1.700"/><path d="M3.500 8v7h10V8" fill="none" stroke="#ff00ff" stroke-width="1.700"/><rect x="7.200" y="10.500" width="2.600" height="4.500" fill="none" stroke="#ff00ff" stroke-width="1"/></svg>
<div class="abs" style="left:347px;top:145px;width:31px;height:31px;border-radius:50%;background:#353535"></div>
<svg class="abs" style="left:354px;top:152px" width="17" height="17" viewBox="0 0 17 17"><path d="M16 8.500H2.500M8 2.500l-6 6 6 6" fill="none" stroke="#10d8d8" stroke-width="1.800"/></svg>
<svg class="abs" style="left:386px;top:152px" width="17" height="17" viewBox="0 0 17 17"><path d="M1 8.500h13.500M9 2.500l6 6-6 6" fill="none" stroke="#7a007a" stroke-width="1.600"/></svg>
<div class="abs" style="left:508px;top:147px;width:639px;height:27px;background:#38383b;border-radius:2px"></div>
<svg class="abs" style="left:516px;top:153px" width="15" height="15" viewBox="0 0 15 15"><circle cx="7.500" cy="7.500" r="6.200" fill="none" stroke="#d8d8d8" stroke-width="1.200"/><path d="M7.500 6.500v4.500" stroke="#d8d8d8" stroke-width="1.500"/><circle cx="7.500" cy="4.300" r="1" fill="#d8d8d8"/></svg>
<svg class="abs" style="left:537px;top:152px" width="14" height="16" viewBox="0 0 14 16"><path d="M3.500 7V4.800a3.500 3.500 0 0 1 7 0V7" fill="none" stroke="#12bc00" stroke-width="2"/><rect x="1" y="6.800" width="12" height="8.200" rx="1" fill="#12bc00"/></svg>
<div class="abs" style="left:559px;top:151px;font-size:14px;line-height:20px;color:#a4a4a6;white-space:nowrap;letter-spacing:-.08px">https://www.<span style="color:#fff">camp-firefox.de</span>/forum/viewtopic.php?f=16&amp;t=123774</div>
<svg class="abs" style="left:1032px;top:152px" width="16" height="17" viewBox="0 0 16 17"><rect x="1.500" y="1.500" width="13" height="14" rx="1.500" fill="none" stroke="#d0d0d0" stroke-width="1.300"/><path d="M4.500 5.500h7M4.500 8h7M4.500 10.500h5" stroke="#d0d0d0" stroke-width="1.100"/></svg>
<div class="abs" style="left:1059px;top:151px;width:1px;height:19px;background:#55556a"></div>
<svg class="abs" style="left:1071px;top:158px" width="17" height="5" viewBox="0 0 17 5"><circle cx="2.200" cy="2.500" r="1.800" fill="#d8d8d8"/><circle cx="8.500" cy="2.500" r="1.800" fill="#d8d8d8"/><circle cx="14.800" cy="2.500" r="1.800" fill="#d8d8d8"/></svg>
<div class="abs" style="left:1099px;top:153px;width:16px;height:15px;background:linear-gradient(#000 0 33%,#e30613 33% 66%,#ffcc00 66%)"></div>
<svg class="abs" style="left:1125px;top:152px" width="17" height="17" viewBox="0 0 17 17"><path d="M8.500 1.800l2.100 4.500 4.800.6-3.600 3.300.9 4.800-4.200-2.400-4.200 2.400.9-4.800L1.600 6.900l4.800-.6z" fill="none" stroke="#e0209a" stroke-width="1.500" stroke-linejoin="round"/></svg>
<svg class="abs" style="left:1160px;top:152px" width="17" height="17" viewBox="0 0 17 17"><path d="M14.200 8.500a5.700 5.700 0 1 1-2-4.300" fill="none" stroke="#ff00ff" stroke-width="1.700"/><path d="M15 1.500v6H9.500z" fill="#ff00ff"/></svg>
<svg class="abs" style="left:1191px;top:151px" width="16" height="18" viewBox="0 0 16 18"><path d="M8 1l7 2v6c0 4-3 7-7 8.500C4 16 1 13 1 9V3z" fill="#8e8e90"/><text x="8" y="11" font-size="6" font-weight="bold" fill="#fff" text-anchor="middle" font-family="Liberation Sans,sans-serif">uo</text></svg>
<svg class="abs" style="left:1315px;top:151px" width="18" height="17" viewBox="0 0 18 17"><path d="M2 2v13M6 2v13M10 2v13M13 3l4 12" stroke="#ff00ff" stroke-width="1.700" fill="none"/></svg>
<svg class="abs" style="left:279px;top:183px" width="16" height="14" viewBox="0 0 17 15"><path d="M1 2.800c0-.8.5-1.300 1.300-1.300h3.800l1.200 1.700h7.400c.8 0 1.300.5 1.300 1.300v7.700c0 .8-.5 1.300-1.300 1.300H2.300c-.8 0-1.300-.5-1.300-1.300z" fill="#3a003a" stroke="#ff00ff" stroke-width="1.200"/><path d="M1 5h15" stroke="#ff00ff" stroke-width="1"/></svg><span class="ib" style="left:299px;letter-spacing:-0.6px">Rasp</span><div class="abs" style="left:332px;top:181px;width:1px;height:17px;background:#4a4a4a"></div>
<svg class="abs" style="left:340px;top:183px" width="16" height="14" viewBox="0 0 17 15"><path d="M1 2.800c0-.8.5-1.300 1.300-1.300h3.800l1.200 1.700h7.400c.8 0 1.300.5 1.300 1.300v7.700c0 .8-.5 1.300-1.300 1.300H2.300c-.8 0-1.300-.5-1.300-1.300z" fill="#3a003a" stroke="#ff00ff" stroke-width="1.200"/><path d="M1 5h15" stroke="#ff00ff" stroke-width="1"/></svg><span class="ib" style="left:360px;letter-spacing:-0.1px">Win10</span><div class="abs" style="left:400px;top:181px;width:1px;height:17px;background:#4a4a4a"></div>
<svg class="abs" style="left:409px;top:183px" width="16" height="14" viewBox="0 0 17 15"><path d="M1 2.800c0-.8.5-1.300 1.300-1.300h3.800l1.200 1.700h7.400c.8 0 1.300.5 1.300 1.300v7.700c0 .8-.5 1.300-1.300 1.300H2.300c-.8 0-1.300-.5-1.300-1.300z" fill="#3a003a" stroke="#ff00ff" stroke-width="1.200"/><path d="M1 5h15" stroke="#ff00ff" stroke-width="1"/></svg><span class="ib" style="left:428px;letter-spacing:0.1px">Linux</span><div class="abs" style="left:464px;top:181px;width:1px;height:17px;background:#4a4a4a"></div>
<svg class="abs" style="left:472px;top:183px" width="16" height="14" viewBox="0 0 17 15"><path d="M1 2.800c0-.8.5-1.300 1.300-1.300h3.800l1.200 1.700h7.400c.8 0 1.300.5 1.300 1.300v7.700c0 .8-.5 1.300-1.300 1.300H2.300c-.8 0-1.300-.5-1.300-1.300z" fill="#3a003a" stroke="#ff00ff" stroke-width="1.200"/><path d="M1 5h15" stroke="#ff00ff" stroke-width="1"/></svg><span class="ib" style="left:492px;letter-spacing:-0.1px">Legacy --&gt; WE</span>
<svg class="abs" style="left:579px;top:183px" width="16" height="14" viewBox="0 0 17 15"><path d="M1 2.800c0-.8.5-1.300 1.300-1.300h3.800l1.200 1.700h7.400c.8 0 1.300.5 1.300 1.300v7.700c0 .8-.5 1.300-1.300 1.300H2.300c-.8 0-1.300-.5-1.300-1.300z" fill="#3a003a" stroke="#ff00ff" stroke-width="1.200"/><path d="M1 5h15" stroke="#ff00ff" stroke-width="1"/></svg><span class="ib" style="left:598px;letter-spacing:0.15px">Mozilla</span><div class="abs" style="left:644px;top:181px;width:1px;height:17px;background:#4a4a4a"></div>
<svg class="abs" style="left:652px;top:183px" width="16" height="14" viewBox="0 0 17 15"><path d="M1 2.800c0-.8.5-1.300 1.300-1.300h3.800l1.200 1.700h7.400c.8 0 1.300.5 1.300 1.300v7.700c0 .8-.5 1.300-1.300 1.300H2.300c-.8 0-1.300-.5-1.300-1.300z" fill="#3a003a" stroke="#ff00ff" stroke-width="1.200"/><path d="M1 5h15" stroke="#ff00ff" stroke-width="1"/></svg><span class="ib" style="left:671px;letter-spacing:-0.15px">Sonstiges</span><div class="abs" style="left:729px;top:181px;width:1px;height:17px;background:#4a4a4a"></div>
<svg class="abs" style="left:737px;top:183px" width="16" height="14" viewBox="0 0 17 15"><path d="M1 2.800c0-.8.5-1.300 1.300-1.300h3.800l1.200 1.700h7.400c.8 0 1.300.5 1.300 1.300v7.700c0 .8-.5 1.300-1.300 1.300H2.300c-.8 0-1.300-.5-1.300-1.300z" fill="#3a003a" stroke="#ff00ff" stroke-width="1.200"/><path d="M1 5h15" stroke="#ff00ff" stroke-width="1"/></svg><span class="ib" style="left:756px;letter-spacing:0.05px">Tierforen &amp; Seiten</span><div class="abs" style="left:858px;top:181px;width:1px;height:17px;background:#4a4a4a"></div>
<svg class="abs" style="left:866px;top:183px" width="16" height="14" viewBox="0 0 17 15"><path d="M1 2.800c0-.8.5-1.300 1.300-1.300h3.800l1.200 1.700h7.400c.8 0 1.300.5 1.300 1.300v7.700c0 .8-.5 1.300-1.300 1.300H2.300c-.8 0-1.300-.5-1.300-1.300z" fill="#3a003a" stroke="#ff00ff" stroke-width="1.200"/><path d="M1 5h15" stroke="#ff00ff" stroke-width="1"/></svg><span class="ib" style="left:886px;letter-spacing:-0.1px">TH</span><div class="abs" style="left:910px;top:181px;width:1px;height:17px;background:#4a4a4a"></div>
<svg class="abs" style="left:918px;top:183px" width="16" height="14" viewBox="0 0 17 15"><path d="M1 2.800c0-.8.5-1.300 1.300-1.300h3.800l1.200 1.700h7.400c.8 0 1.300.5 1.300 1.300v7.700c0 .8-.5 1.300-1.300 1.300H2.300c-.8 0-1.300-.5-1.300-1.300z" fill="#3a003a" stroke="#ff00ff" stroke-width="1.200"/><path d="M1 5h15" stroke="#ff00ff" stroke-width="1"/></svg><span class="ib" style="left:938px;letter-spacing:0px">Cosmetic &amp; Fashion</span><div class="abs" style="left:1050px;top:181px;width:1px;height:17px;background:#4a4a4a"></div>
<div class="abs" style="left:1055px;top:181px;width:1px;height:17px;background:#4a4a4a"></div><svg class="abs" style="left:1063px;top:182px" width="18" height="16" viewBox="0 0 18 16"><path d="M9 1l8 7-8 7-8-7z" fill="#ffd400"/><text x="9" y="10.500" font-size="6.500" font-weight="bold" fill="#e2001a" text-anchor="middle" font-family="Liberation Sans,sans-serif">FRITZ!</text></svg><span class="ib" style="left:1084px;letter-spacing:-0.6px">FRITZ!Box</span><div class="abs" style="left:1143px;top:181px;width:1px;height:17px;background:#4a4a4a"></div>
<svg class="abs" style="left:1151px;top:182px" width="16" height="16" viewBox="0 0 16 16"><rect width="16" height="16" fill="#e3101a"/><path d="M2 14V3l6 8 6-8v11" fill="none" stroke="#fff" stroke-width="2.200"/></svg><span class="ib" style="left:1171px;letter-spacing:-0.08px">Aktuelles - MVG Märki...</span>
<svg class="abs" style="left:1305px;top:181px" width="18" height="18" viewBox="0 0 18 18"><circle cx="9" cy="9" r="8" fill="#6a6a6a" stroke="#c8c8c8" stroke-width="1.400"/><path d="M4 6c2-2 4-1 5 1s3 1 4 3-2 4-4 3-5-3-5-7z" fill="#bdbdbd"/></svg><span class="ib" style="left:1325px;letter-spacing:0px">C</span>
<div class="abs" style="left:190px;top:205px;width:218px;height:28px;background:#8b8b8b;border:1.500px solid #f01818;border-bottom:2px solid #555;border-radius:9px 9px 0 0"></div>
<svg class="abs" style="left:195px;top:209px" width="21" height="21" viewBox="0 0 21 21"><defs><linearGradient id="gsd" x1="0" y1="0" x2="1" y2="1"><stop offset="0" stop-color="#5a2ab8"/><stop offset=".5" stop-color="#1a6ad8"/><stop offset="1" stop-color="#10c8e8"/></linearGradient></defs><circle cx="10.500" cy="10.500" r="10" fill="url(#gsd)"/><path d="M3 12c1-5 7-8 12-5-4 0-7 2-6 5 1 2 4 2 6 1-2 4-8 5-11 2z" fill="#8be8f8"/></svg>
<span class="abs" style="left:221px;top:210px;font-size:11.500px;line-height:18px;color:#1c1420;letter-spacing:-.2px;white-space:nowrap">GroupSpeedDial</span>
<div class="abs" style="left:379px;top:209.500px;width:22px;height:21.500px;background:#f00;border-radius:5px"></div><svg class="abs" style="left:383px;top:214px" width="14" height="13" viewBox="0 0 14 13"><path d="M2 1.500l10 10M12 1.500l-10 10" stroke="#ff20d0" stroke-width="1.500"/></svg>
<div class="abs" style="left:411px;top:205px;width:216px;height:28px;background:#ff00ff;border-radius:9px 9px 0 0"></div>
<div class="abs" style="left:416px;top:210px;width:19px;height:18px;background:#9ab8c8;border:1.200px solid #1a2be0;color:#fff;font-size:13px;font-style:italic;font-weight:bold;line-height:15px;text-align:center;letter-spacing:-1px;overflow:hidden">Fx</div>
<span class="abs" style="left:441px;top:210px;font-size:11.500px;line-height:18px;color:#28106a;letter-spacing:0px;white-space:nowrap">Hintergrundfarbe im Sanwich-</span>
<div class="abs" style="left:572px;top:208px;width:24px;height:22px;background:linear-gradient(90deg,rgba(255,0,255,0),#ff00ff)"></div>
<div class="abs" style="left:599.500px;top:209.500px;width:22px;height:21.500px;background:#f00;border-radius:5px"></div><svg class="abs" style="left:603.500px;top:214px" width="14" height="13" viewBox="0 0 14 13"><path d="M2 1.500l10 10M12 1.500l-10 10" stroke="#ff50d0" stroke-width="1.500"/></svg>
<svg class="abs" style="left:635px;top:209px" width="16" height="16" viewBox="0 0 16 16"><path d="M8 1v14M1 8h14" stroke="#ff00ff" stroke-width="1.600"/></svg>
<div class="abs" style="left:188px;top:233px;width:14.600px;height:776px;background:#000"></div>
<div class="abs" style="left:188px;top:233px;width:14.600px;height:16px;background:#ff4a00"></div>
<div class="abs" style="left:188px;top:693px;width:14.600px;height:283px;background:#ff00ff"></div>
<div class="abs" style="left:188px;top:992px;width:14.600px;height:17px;background:#ff4a00"></div>
<style>.it{position:absolute;left:1367px;font-size:11px;line-height:16px;color:#00e6e6;white-space:nowrap;text-shadow:0 0 .7px #00e6e6}.is{position:absolute;left:1490px;font-size:11.500px;line-height:16px;color:#8a8a8a;white-space:nowrap;letter-spacing:-.3px}</style>
<div class="abs" style="left:1332px;top:177px;width:260px;height:532px;background:#fff;box-shadow:0 1px 4px rgba(0,0,0,.45)"></div>
<div class="abs" style="left:1332px;top:183px;width:260px;height:24.5px;background:#000"></div><div class="abs" style="left:1332px;top:220px;width:260px;height:72px;background:#000"></div><div class="abs" style="left:1332px;top:376px;width:260px;height:97.5px;background:#000"></div><div class="abs" style="left:1332px;top:486px;width:260px;height:71.5px;background:#000"></div><div class="abs" style="left:1332px;top:570px;width:260px;height:97px;background:#000"></div><div class="abs" style="left:1332px;top:680px;width:260px;height:24px;background:#000"></div>
<div class="abs" style="left:1332px;top:213px;width:260px;height:1px;background:#dedede"></div><div class="abs" style="left:1332px;top:297px;width:260px;height:1px;background:#dedede"></div><div class="abs" style="left:1332px;top:334.5px;width:260px;height:1px;background:#dedede"></div><div class="abs" style="left:1332px;top:370px;width:260px;height:1px;background:#dedede"></div><div class="abs" style="left:1332px;top:479.5px;width:260px;height:1px;background:#dedede"></div><div class="abs" style="left:1332px;top:563.5px;width:260px;height:1px;background:#dedede"></div><div class="abs" style="left:1332px;top:673.5px;width:260px;height:1px;background:#dedede"></div>
<svg class="abs" style="left:1343px;top:186.5px" width="17" height="17" viewBox="0 0 16 16"><path d="M2.600 6.800A5.600 5.600 0 0 1 12.800 5" fill="none" stroke="#ff00ff" stroke-width="1.900"/><path d="M14 1.200v5h-5z" fill="#ff00ff"/><path d="M13.400 9.200A5.600 5.600 0 0 1 3.200 11" fill="none" stroke="#ff00ff" stroke-width="1.900"/><path d="M2 14.800v-5h5z" fill="#ff00ff"/></svg><span class="it" style="top:186.5px">Bei Sync anmelden</span>
<svg class="abs" style="left:1343px;top:224.0px" width="17" height="17" viewBox="0 0 16 16"><path d="M8 13.200H3.200c-1.100 0-2-.8-2-2V4c0-1.200.9-2 2-2h8.800c1.100 0 2 .8 2 2v4" fill="none" stroke="#ff00ff" stroke-width="1.500"/><path d="M1.200 4.800h12.800" stroke="#ff00ff" stroke-width="1.500"/><path d="M12.400 9.200v5.600M9.600 12h5.600" stroke="#ff00ff" stroke-width="1.400"/></svg><span class="it" style="top:224.0px">Neues Fenster</span>
<svg class="abs" style="left:1343px;top:248.0px" width="17" height="17" viewBox="0 0 16 16"><path d="M0 7.600C0 4.400 2 3.600 4.400 3.600c1.800 0 2.600 1 3.600 1s1.800-1 3.600-1c2.400 0 4.400.8 4.400 4s-1.800 4.400-4 4.400c-2.100 0-2.800-1.800-4-1.800S6.100 12 4 12C1.800 12 0 10.800 0 7.600z" fill="#ff00ff"/><ellipse cx="4.600" cy="7.800" rx="2.100" ry="1.500" fill="#000"/><ellipse cx="11.400" cy="7.800" rx="2.100" ry="1.500" fill="#000"/></svg><span class="it" style="top:248.0px">Neues privates Fenster</span><span class="is" style="top:248.0px">Strg+</span>
<svg class="abs" style="left:1343px;top:272.5px" width="17" height="17" viewBox="0 0 16 16"><path d="M4 12.400H3.200c-1.100 0-2-.8-2-2V4c0-1.200.9-2 2-2h9.600c1.100 0 2 .8 2 2v6.400c0 1.200-.9 2-2 2h-1.600" fill="none" stroke="#ff00ff" stroke-width="1.500"/><path d="M1.200 4.800h13.600" stroke="#ff00ff" stroke-width="1.500"/><path d="M10.400 7.600V12H6" fill="none" stroke="#ff00ff" stroke-width="1.400"/><path d="M8 9.600L5.600 12 8 14.400" fill="none" stroke="#ff00ff" stroke-width="1.400"/></svg><span class="it" style="top:272.5px">Vorherige Sitzung wiederherstellen</span>
<svg class="abs" style="left:1343px;top:380.5px" width="17" height="17" viewBox="0 0 16 16"><path d="M1.600 1.600v12.800M5.200 1.600v12.800M8.800 1.600v12.800" stroke="#ff00ff" stroke-width="1.700"/><path d="M11.200 2.800l3.600 11.200" stroke="#ff00ff" stroke-width="1.700"/></svg><span class="it" style="top:380.5px">Bibliothek</span>
<svg class="abs" style="left:1343px;top:404.5px" width="17" height="17" viewBox="0 0 16 16"><path d="M.8 5.600h4c-1.400-2.800 3.800-2.800 2.400 0h4v3.600c2.800-1.400 2.800 3.800 0 2.400v3.600H7.600c1.200-2.400-3.200-2.400-2 0H.8v-3.600c2.400 1.200 2.400-3.200 0-2z" fill="#ff00ff"/></svg><span class="it" style="top:404.5px">Add-ons</span><span class="is" style="top:404.5px">Strg+U</span>
<svg class="abs" style="left:1343px;top:428.5px" width="17" height="17" viewBox="0 0 16 16"><g stroke="#ff00ff" stroke-width="2.100"><path d="M8 0v16M0 8h16M2.300 2.300l11.400 11.400M13.700 2.300L2.300 13.700"/></g><circle cx="8" cy="8" r="5" fill="#ff00ff"/><circle cx="8" cy="8" r="2.900" fill="#000"/></svg><span class="it" style="top:428.5px">Einstellungen</span>
<svg class="abs" style="left:1343px;top:452.5px" width="17" height="17" viewBox="0 0 16 16"><path d="M15.200.8L6.800 8.400l1.600 1.600L15.600 2z" fill="#ff00ff"/><path d="M6 9.200c-2-.4-3.200.8-3.600 2.800-.2 1.200-.8 2-2 2.400 2.400 1.200 5.600.4 6.800-1.600.6-1.200.2-2.400-1.200-3.600z" fill="#ff00ff"/></svg><span class="it" style="top:452.5px">Anpassen...</span>
<span class="it" style="top:489.5px">Datei öffnen...</span>
<span class="it" style="top:513.5px">Seite speichern unter...</span>
<svg class="abs" style="left:1343px;top:537.5px" width="17" height="17" viewBox="0 0 16 16"><path d="M4 4.800V1.200h8v3.600" fill="none" stroke="#ff00ff" stroke-width="1.500"/><rect x=".8" y="4.800" width="14.400" height="7.200" rx="1.600" fill="#ff00ff"/><rect x="3.600" y="8.800" width="8.800" height="6" fill="#000" stroke="#ff00ff" stroke-width="1.300"/><path d="M5.600 11.200h4.800M5.600 13h3.200" stroke="#ff00ff" stroke-width="1"/></svg><span class="it" style="top:537.5px">Drucken...</span>
<svg class="abs" style="left:1343px;top:574.5px" width="17" height="17" viewBox="0 0 16 16"><circle cx="6.400" cy="6.400" r="4.800" fill="none" stroke="#ff00ff" stroke-width="1.900"/><path d="M10 10l5.200 5.200" stroke="#ff00ff" stroke-width="2.200"/></svg><span class="it" style="top:574.5px">Seite durchsuchen</span>
<span class="it" style="top:598.5px">Sonstiges</span>
<span class="it" style="top:622.5px">Web-Entwickler</span>
<svg class="abs" style="left:1343px;top:646.5px" width="17" height="17" viewBox="0 0 16 16"><circle cx="8" cy="8" r="6.800" fill="none" stroke="#ff00ff" stroke-width="1.400"/><path d="M5.600 6.400c0-1.600 1-2.400 2.400-2.400s2.400.8 2.400 2.100c0 1.600-2.400 1.600-2.400 3.500" fill="none" stroke="#ff00ff" stroke-width="1.400"/><circle cx="8" cy="12" r="1" fill="#ff00ff"/></svg><span class="it" style="top:646.5px">Hilfe</span>
<svg class="abs" style="left:1343px;top:683.5px" width="17" height="17" viewBox="0 0 16 16"><path d="M4.800 3.600a6 6 0 1 0 6.400 0" fill="none" stroke="#ff00ff" stroke-width="1.800"/><path d="M8 .8v7.200" stroke="#ff00ff" stroke-width="1.900"/></svg><span class="it" style="top:683.5px">Beenden</span><span class="is" style="top:683.5px">Strg+U</span>
<span class="it" style="top:308.500px;color:#1a1a1a;text-shadow:none">Zoom</span><span class="it" style="top:344.500px;color:#1a1a1a;text-shadow:none">Bearbeiten</span>
<div class="abs" style="left:1439px;top:305px;width:23px;height:23px;background:#000"></div><div class="abs" style="left:1444px;top:316px;width:13px;height:2px;background:#ff00ff"></div>
<div class="abs" style="left:1472px;top:307px;width:43px;height:21px;background:#000;border:1.500px solid #444;border-radius:11px;color:#00e6e6;font-size:11.500px;line-height:18px;text-align:center;letter-spacing:-.3px">100%</div>
<div class="abs" style="left:1481px;top:341px;width:23px;height:23px;background:#000"></div><svg class="abs" style="left:1485px;top:345px" width="15" height="15" viewBox="0 0 15 15"><path d="M3.500 1l6.500 9.500M11.500 1L5 10.500" stroke="#ff00ff" stroke-width="1.600"/><circle cx="3.800" cy="11.800" r="2" fill="none" stroke="#ff00ff" stroke-width="1.400"/><circle cx="11.200" cy="11.800" r="2" fill="none" stroke="#ff00ff" stroke-width="1.400"/></svg>
<div class="abs" style="left:1373px;top:145px;width:120px;height:48px;border-radius:4px;background:linear-gradient(90deg,rgba(90,130,180,.28),rgba(0,0,0,.12) 60%),linear-gradient(180deg,rgba(66,86,116,.94) 0%,rgba(52,66,90,.94) 47%,rgba(8,26,52,.9) 50%,rgba(5,18,38,.93) 100%);box-shadow:0 0 0 1px rgba(40,60,90,.6) inset"></div>
<div class="abs" style="left:1373px;top:153px;width:120px;height:34px;color:#2a88d0;font-size:30px;line-height:34px;text-align:center;letter-spacing:-.8px;opacity:.92">20:18</div>

</div><!--ENDIMG--></div>
<div id="addonbar"><svg class="abs" style="left:1779px;top:6px" width="20" height="22" viewBox="0 0 20 22"><path d="M3 1.500h12l2.500 2.500v16l-4-2-4 2-4-2-2.500 1.500z" fill="#c7d8f2" stroke="#5f86c8" stroke-width="1.300"/><path d="M6 6.500h8M6 9.500h8M6 12.500h6" stroke="#5f86c8" stroke-width="1.200"/></svg>
<svg class="abs" style="left:1815px;top:6px" width="24" height="24" viewBox="0 0 24 24"><rect x="1" y="3" width="21" height="18" rx="4" fill="#25282c"/><circle cx="7.500" cy="16" r="3.600" fill="#eee"/><circle cx="16" cy="16" r="3.600" fill="#eee"/></svg>
<div class="abs" style="left:1829px;top:1px;width:16px;height:17px;background:#e22336;color:#fff;font-size:13px;font-weight:bold;line-height:17px;text-align:center">3</div>
<svg class="abs" style="left:1852px;top:5px" width="24" height="25" viewBox="0 0 24 25"><path d="M12 1c3 2 6 3 10 3v8c0 6-4 10-10 12C6 22 2 18 2 12V4c4 0 7-1 10-3z" fill="#8f0f1c"/><text x="12" y="15.500" font-size="9" font-weight="bold" fill="#fff" text-anchor="middle" font-family="Liberation Sans,sans-serif">uo</text></svg>
<div class="abs" style="left:1889px;top:4px;width:22px;height:26px;font-size:25px;font-weight:bold;line-height:26px;color:#7fc8a4;text-align:center;text-shadow:1px 0 0 #3f8f7a,-1px 0 0 #3f8f7a,0 1px 0 #3f8f7a,0 -1px 0 #3f8f7a">S</div>
</div><!--EA-->
<div id="taskbar"><style>.tt{position:absolute;top:9px;font-size:15px;line-height:22px;color:#fff;white-space:nowrap}</style>
<div class="abs" style="left:865px;top:0;width:201px;height:38px;background:#3b4249"></div>
<div class="abs" style="left:146px;top:35px;width:190px;height:3px;background:#8da3b4"></div>
<div class="abs" style="left:669px;top:35px;width:190px;height:3px;background:#8da3b4"></div>
<div class="abs" style="left:865px;top:35px;width:201px;height:3px;background:#8da3b4"></div>
<svg class="abs" style="left:12px;top:9px" width="21" height="21" viewBox="0 0 21 21"><path d="M0 3l8.500-1.200v8H0zM9.700 1.600L21 0v9.800H9.700zM0 11h8.500v8L0 17.800zM9.700 11H21v10L9.700 19.400z" fill="#fff"/></svg>
<svg class="abs" style="left:61px;top:9px" width="20" height="20" viewBox="0 0 20 20"><path d="M1 9C1.500 4 5 1 10 1c5.500 0 9 3.500 9 8.500v2H7c.3 2.500 2.300 4 5.200 4 2 0 3.800-.5 5.500-1.500v4c-1.800 1-4 1.500-6.500 1.500C5.500 19.500 2 16 2 11.500c0-3 1.500-5.300 4-6.500C4.500 6.500 4 8 4 9zm6 -1h7c0-2.200-1.400-3.500-3.400-3.500S7.300 6 7 8z" fill="#1a78d8"/></svg>
<svg class="abs" style="left:106px;top:8px" width="21" height="22" viewBox="0 0 21 22"><path d="M1.500 2.500h12l4 4v14h-16z" fill="#eef3e2" stroke="#7a8a6a" stroke-width="1"/><rect x="2" y="11" width="15" height="9" fill="#8bc34a"/><path d="M4 8v6M6.500 6v9M9 9v4M11.500 10v3" stroke="#2e4a1a" stroke-width="1.200"/><path d="M19 1l-7 10-1 3 2.500-1.500L20.500 2.500z" fill="#f2b01e" stroke="#b06a10" stroke-width=".6"/></svg>
<svg class="abs" style="left:152px;top:8px" width="16" height="22" viewBox="0 0 16 22"><path d="M2 2.500h9c1 0 1.500.5 1.500 1.500v15H3.500C2.500 19 2 18.500 2 17.500z" fill="#f6d674"/><path d="M12.500 6.500H14v12.500c0 1-.5 1.500-1.500 1.500H3.500v-1.500z" fill="#e5b84a"/><path d="M2 2.500h9v3H2z" fill="#fbe9a6"/></svg>
<span class="tt" style="left:175px">D:\Test\Profilordner\c...</span>
<svg class="abs" style="left:354px;top:8px" width="21" height="21" viewBox="0 0 21 21"><rect width="20" height="20" fill="#1414c8"/><path d="M19 17l2 3" stroke="#111" stroke-width="1"/><path d="M5 3h12v4h-7v3h5v4h-5v5H5z" fill="#d81818"/><path d="M3.500 1.500h12v4h-7v3h5v4h-5v5h-5z" fill="#ffe81a"/></svg>
<svg class="abs" style="left:398px;top:8px" width="22" height="22" viewBox="0 0 22 22"><path d="M8 2l11 3-4 15-13-5z" fill="#a9d6ee" stroke="#7aa8c8" stroke-width=".8"/><path d="M15 20l4-15 1.500 1-4 14.500z" fill="#e8e8e8"/><path d="M2 15l13 5 1.500 .5-13.500-4z" fill="#d8d8d8"/></svg>
<svg class="abs" style="left:446px;top:8px" width="21" height="21" viewBox="0 0 21 21"><rect width="21" height="21" fill="#fff"/><path d="M3 9l4-5h10l2 5v7H3z" fill="#d8d8d8" stroke="#8a1010" stroke-width="1.200"/><path d="M6 6h9M2 12h14" stroke="#c81818" stroke-width="2"/><rect x="5" y="13" width="9" height="3" fill="#777"/></svg>
<svg class="abs" style="left:492px;top:8px" width="21" height="22" viewBox="0 0 21 22"><rect width="21" height="19" fill="#0a0a0a"/><path d="M6 0h9v9h6L10.500 22 0 9h6z" fill="#ff2a00"/></svg>
<svg class="abs" style="left:538px;top:8px" width="21" height="22" viewBox="0 0 21 22"><rect x="2" y="1" width="11" height="15" fill="#fff" stroke="#444" stroke-width=".8"/><rect x="7" y="5" width="12" height="16" fill="#fff" stroke="#888" stroke-width=".8"/><path d="M4 3h3v5H4z" fill="#222"/><path d="M12 9l2 2-2 2-2-2zM15 15l1.500 1.500L15 18l-1.500-1.500z" fill="#e01818"/></svg>
<svg class="abs" style="left:584px;top:8px" width="21" height="21" viewBox="0 0 21 21"><rect x=".5" y=".5" width="20" height="20" fill="#c8c8c8" stroke="#f4f4f4" stroke-width="1"/><path d="M20.500 .5v20H.5" fill="none" stroke="#777" stroke-width="1"/><text x="10.500" y="17" font-size="18" font-weight="bold" font-family="Liberation Serif,serif" fill="#d81818" text-anchor="middle">D</text></svg>
<svg class="abs" style="left:629px;top:7px" width="22" height="24" viewBox="0 0 22 24"><rect x="6" y="1" width="9" height="5" fill="#222"/><path d="M8 6h5v4H8z" fill="#555"/><rect x="1" y="10" width="20" height="13" rx="1" fill="#1c1c1c"/><circle cx="11" cy="16.500" r="4.300" fill="#2c2c2c" stroke="#ddd" stroke-width="1"/><circle cx="11" cy="16.500" r="1.800" fill="#888"/><path d="M3 12.500v9M19 12.500v9" stroke="#eee" stroke-width="1.200"/><rect x="16.500" y="11.500" width="2.500" height="2" fill="#e01818"/></svg>
<svg class="abs" style="left:673px;top:8px" width="21" height="21" viewBox="0 0 21 21"><rect width="21" height="21" fill="#ece6da"/><circle cx="10.500" cy="10.500" r="9" fill="#e8962a"/><path d="M4 14c2-6 6-9 12-9-2 2-3 4-2 7-3-2-6-1-10 2z" fill="#3a5a9a"/><path d="M8 11l4-3 3 5-5 3z" fill="#f4c060" stroke="#8a5a10" stroke-width=".8"/></svg>
<span class="tt" style="left:698.500px">(1) Hintergrundfarbe i...</span>
<svg class="abs" style="left:873px;top:8px" width="22" height="22" viewBox="0 0 22 22"><circle cx="11" cy="11" r="10.500" fill="#e8261a"/><path d="M5 4c1 2 1 3 0 5 2-2 5-2 7 0 2 1 3 3 2 5-1 3-5 3-7 1 0 3 4 5 8 3 3-2 4-6 2-10-1-3-4-5-7-5-2 0-4 0-5 1z" fill="#ffe0c8" opacity=".9"/><path d="M3 6c1 6 4 10 9 11-5 1-10-3-9-11z" fill="#ff8a1a"/></svg>
<span class="tt" style="left:899px;letter-spacing:-.3px">optik03.png (PNG-Gra...</span>
<svg class="abs" style="left:1689px;top:13px" width="18" height="12" viewBox="0 0 18 12"><path d="M1 10.500l8-8.500 8 8.500" fill="none" stroke="#fff" stroke-width="1.500"/></svg>
<svg class="abs" style="left:1718px;top:10px" width="22" height="18" viewBox="0 0 22 18"><rect x="3.500" y="6.500" width="16" height="9" fill="none" stroke="#fff" stroke-width="1.300"/><rect x="5.500" y="8.500" width="12" height="5" fill="#fff"/><rect x="20" y="9" width="1.500" height="4" fill="#fff"/><path d="M1 2.500h4v3M3 .5v4" stroke="#fff" stroke-width="1.200" fill="none"/></svg>
<svg class="abs" style="left:1747px;top:10px" width="22" height="20" viewBox="0 0 22 20"><rect x="5" y="1.500" width="16" height="11" fill="none" stroke="#fff" stroke-width="1.400"/><path d="M9 18.500h9M13.500 13v5" stroke="#fff" stroke-width="1.400"/><rect x="1" y="4" width="5" height="14" fill="#2c3238" stroke="#fff" stroke-width="1.300"/></svg>
<svg class="abs" style="left:1776px;top:10px" width="22" height="20" viewBox="0 0 22 20"><path d="M1.500 7h3.500l4.500-4v14L5 13H1.500z" fill="none" stroke="#fff" stroke-width="1.300"/><path d="M12.500 7c1.300 1.500 1.300 4.500 0 6" fill="none" stroke="#fff" stroke-width="1.200"/><path d="M15.500 5c2.200 2.500 2.200 7.500 0 10" fill="none" stroke="#aaa" stroke-width="1.100"/><path d="M18.500 3c3 3.500 3 10.500 0 14" fill="none" stroke="#777" stroke-width="1.100"/></svg>
<span class="tt" style="left:1811px;letter-spacing:-.5px">21:48</span>
<svg class="abs" style="left:1868px;top:9px" width="22" height="22" viewBox="0 0 22 22"><path d="M1.500 1.500h19v14.500H11l-4.500 4.500V16h-5z" fill="none" stroke="#fff" stroke-width="1.400"/></svg>
</div><!--ET-->
<div id="popup"><style>.pt{position:absolute;font-size:18px;line-height:24px;color:#f4f4f4;white-space:nowrap}.ps{position:absolute;font-size:18px;line-height:24px;color:#858585;white-space:nowrap;letter-spacing:-.65px}.psep{position:absolute;left:0;width:395px;height:1px;background:#0b0b0b}</style>
<svg class="abs" style="left:15px;top:17px" width="21" height="20" viewBox="0 0 20 20"><path d="M2.800 8.800A7.200 7.200 0 0 1 15.800 6" fill="none" stroke="#f2f2f2" stroke-width="2.900"/><path d="M18.200 1.200v7.300h-7.300z" fill="#f2f2f2"/><path d="M17.200 11.200A7.200 7.200 0 0 1 4.200 14" fill="none" stroke="#f2f2f2" stroke-width="2.900"/><path d="M1.800 18.800v-7.300h7.300z" fill="#f2f2f2"/></svg><span class="pt" style="left:45px;top:15.7px;letter-spacing:0.07px">Bei Sync anmelden</span>
<svg class="abs" style="left:15px;top:69px" width="21" height="20" viewBox="0 0 20 20"><path d="M10 16.500H4c-1.400 0-2.500-1-2.500-2.500V5C1.500 3.500 2.600 2.500 4 2.500h11c1.400 0 2.500 1 2.500 2.500v5" fill="none" stroke="#f2f2f2" stroke-width="1.900"/><path d="M1.500 6h16" stroke="#f2f2f2" stroke-width="1.900"/><path d="M15.500 11.500v7M12 15h7" stroke="#f2f2f2" stroke-width="1.800"/></svg><span class="pt" style="left:45px;top:67.7px;letter-spacing:0.04px">Neues Fenster</span><span class="ps" style="right:16.11px;top:67.7px;letter-spacing:-0.39px">Strg+N</span>
<svg class="abs" style="left:15px;top:105px" width="21" height="20" viewBox="0 0 20 20"><path d="M0 9.300C0 6 2.500 5.200 5.500 5.200c2.300 0 3.200 1 4.500 1s2.200-1 4.500-1c3 0 5.500.8 5.500 4.100s-2.300 4.900-5 4.900c-2.600 0-3.500-2-5-2s-2.400 2-5 2C2.300 14.200 0 12.600 0 9.300z" fill="#f2f2f2"/><ellipse cx="5.600" cy="9.600" rx="2.500" ry="1.500" fill="#000"/><ellipse cx="14.400" cy="9.600" rx="2.500" ry="1.500" fill="#000"/></svg><span class="pt" style="left:45px;top:103.7px;letter-spacing:0.15px">Neues privates Fenster</span><span class="ps" style="right:15.9px;top:103.7px;letter-spacing:-0.6px">Strg+Umschalt+P</span>
<svg class="abs" style="left:15px;top:141px" width="21" height="20" viewBox="0 0 20 20"><path d="M2.500 15.200c-.6-.4-1-1.200-1-2.200V5C1.500 3.500 2.600 2.500 4 2.500h12c1.400 0 2.500 1 2.500 2.500v8c0 1.500-1.100 2.500-2.500 2.500h-1.500" fill="none" stroke="#f2f2f2" stroke-width="1.900"/><path d="M1.500 6h17" stroke="#f2f2f2" stroke-width="1.900"/><path d="M5.500 10v5.500h6" fill="none" stroke="#f2f2f2" stroke-width="1.800"/><path d="M9.200 12.700l2.800 2.800-2.800 2.800" fill="none" stroke="#f2f2f2" stroke-width="1.800"/></svg><span class="pt" style="left:45px;top:139.7px;letter-spacing:0.39px">Vorherige Sitzung wiederherstellen</span>
<span class="pt" style="left:45px;top:188.7px;letter-spacing:0.75px">Zoom</span>
<span class="pt" style="left:45px;top:234.7px;letter-spacing:0.23px">Bearbeiten</span>
<svg class="abs" style="left:15px;top:285px" width="21" height="20" viewBox="0 0 20 20"><path d="M2 2v16M6.500 2v16M11 2v16" stroke="#f2f2f2" stroke-width="2.300" stroke-linecap="round"/><path d="M14.200 3.500l4.300 14" stroke="#f2f2f2" stroke-width="2.300" stroke-linecap="round"/></svg><span class="pt" style="left:45px;top:283.7px;letter-spacing:0.53px">Bibliothek</span><svg class="abs" style="left:367px;top:288px" width="9" height="14" viewBox="0 0 9 14"><path d="M2 1.500l5 5.500-5 5.500" fill="none" stroke="#8a8a8a" stroke-width="1.700"/></svg>
<svg class="abs" style="left:15px;top:321px" width="21" height="20" viewBox="0 0 20 20"><path d="M.5 5H6V3.600a2.600 2.600 0 1 1 5.200 0V5h4.300v4.300h1.400a2.600 2.600 0 1 1 0 5.200h-1.400V19h-4.800v-1.300a2.100 2.100 0 1 0-4.200 0V19h-6v-5h1.600a2.100 2.100 0 1 0 0-4.200H.5z" fill="#f2f2f2"/></svg><span class="pt" style="left:45px;top:319.7px;letter-spacing:0.61px">Add-ons</span><span class="ps" style="right:16.01px;top:319.7px;letter-spacing:-0.49px">Strg+Umschalt+A</span>
<svg class="abs" style="left:15px;top:357px" width="21" height="20" viewBox="0 0 20 20"><g stroke="#f2f2f2" stroke-width="2.700"><path d="M10 0v20M0 10h20M2.900 2.900l14.200 14.200M17.100 2.900L2.900 17.100"/></g><circle cx="10" cy="10" r="6.300" fill="#f2f2f2"/><circle cx="10" cy="10" r="3.500" fill="#000"/></svg><span class="pt" style="left:45px;top:355.7px;letter-spacing:0.28px">Einstellungen</span>
<svg class="abs" style="left:15px;top:393px" width="21" height="20" viewBox="0 0 20 20"><path d="M18.800 1.200L9.300 10.800" stroke="#f2f2f2" stroke-width="2.700" stroke-linecap="round"/><path d="M7.800 10.800c-2.600-.5-4.200 1-4.700 3.400-.3 1.600-1.100 2.700-2.600 3.300 3.100 1.400 7.200.6 8.800-1.900.9-1.500.4-3.200-1.500-4.800z" fill="#f2f2f2"/></svg><span class="pt" style="left:45px;top:391.7px;letter-spacing:-0.1px">Anpassen...</span>
<span class="pt" style="left:45px;top:443.7px;letter-spacing:0.3px">Datei öffnen...</span><span class="ps" style="right:15.91px;top:443.7px;letter-spacing:-0.59px">Strg+O</span>
<span class="pt" style="left:45px;top:479.7px;letter-spacing:0.22px">Seite speichern unter...</span><span class="ps" style="right:15.58px;top:479.7px;letter-spacing:-0.92px">Strg+S</span>
<svg class="abs" style="left:15px;top:517px" width="21" height="20" viewBox="0 0 20 20"><path d="M5 6.500V1.500h10v5" fill="none" stroke="#f2f2f2" stroke-width="1.900"/><rect x=".5" y="6.500" width="19" height="9" rx="2.200" fill="#f2f2f2"/><rect x="4.500" y="11.300" width="11" height="7.400" rx=".8" fill="#000" stroke="#f2f2f2" stroke-width="1.700"/><path d="M6.800 14h6.400M6.800 16.300h4.500" stroke="#f2f2f2" stroke-width="1.300"/><circle cx="16.300" cy="9.300" r=".9" fill="#000"/></svg><span class="pt" style="left:45px;top:515.7px;letter-spacing:0.06px">Drucken...</span>
<svg class="abs" style="left:15px;top:569px" width="21" height="20" viewBox="0 0 20 20"><circle cx="7.800" cy="7.800" r="5.700" fill="none" stroke="#f2f2f2" stroke-width="2.700"/><path d="M12.300 12.300l6.500 6.500" stroke="#f2f2f2" stroke-width="3" stroke-linecap="round"/></svg><span class="pt" style="left:45px;top:567.7px;letter-spacing:0.18px">Seite durchsuchen</span><span class="ps" style="right:15.68px;top:567.7px;letter-spacing:-0.82px">Strg+F</span>
<span class="pt" style="left:45px;top:603.7px;letter-spacing:0.1px">Sonstiges</span><svg class="abs" style="left:367px;top:608px" width="9" height="14" viewBox="0 0 9 14"><path d="M2 1.500l5 5.500-5 5.500" fill="none" stroke="#8a8a8a" stroke-width="1.700"/></svg>
<span class="pt" style="left:45px;top:639.7px;letter-spacing:0.33px">Web-Entwickler</span><svg class="abs" style="left:367px;top:644px" width="9" height="14" viewBox="0 0 9 14"><path d="M2 1.500l5 5.500-5 5.500" fill="none" stroke="#8a8a8a" stroke-width="1.700"/></svg>
<svg class="abs" style="left:15px;top:677px" width="21" height="20" viewBox="0 0 20 20"><circle cx="10" cy="10" r="8.500" fill="none" stroke="#f2f2f2" stroke-width="1.700"/><path d="M7 8c0-2 1.300-3 3-3s3 1 3 2.600c0 2-3 2-3 4.400" fill="none" stroke="#f2f2f2" stroke-width="1.800"/><circle cx="10" cy="15" r="1.200" fill="#f2f2f2"/></svg><span class="pt" style="left:45px;top:675.7px;letter-spacing:0.42px">Hilfe</span><svg class="abs" style="left:367px;top:680px" width="9" height="14" viewBox="0 0 9 14"><path d="M2 1.500l5 5.500-5 5.500" fill="none" stroke="#8a8a8a" stroke-width="1.700"/></svg>
<svg class="abs" style="left:15px;top:729px" width="21" height="20" viewBox="0 0 20 20"><path d="M6 4.500a7.500 7.500 0 1 0 8 0" fill="none" stroke="#f2f2f2" stroke-width="2.200"/><path d="M10 1v9" stroke="#f2f2f2" stroke-width="2.400"/></svg><span class="pt" style="left:45px;top:727.7px;letter-spacing:0.13px">Beenden</span><span class="ps" style="right:16.0px;top:727.7px;letter-spacing:-0.5px">Strg+Umschalt+Q</span>
<div class="psep" style="top:53px"></div><div class="psep" style="top:175px"></div><div class="psep" style="top:223px"></div><div class="psep" style="top:271px"></div><div class="psep" style="top:429px"></div><div class="psep" style="top:553px"></div><div class="psep" style="top:713px"></div>
<svg class="abs" style="left:187px;top:191px" width="18" height="18" viewBox="0 0 18 18"><path d="M1 9h15" stroke="#f2f2f2" stroke-width="2"/></svg><div class="abs" style="left:222px;top:186px;width:73px;height:27px;border-radius:14px;background:#fbfbfb;color:#f0f0f0;font-size:17px;line-height:27px;text-align:center">100%</div><svg class="abs" style="left:313px;top:190px" width="20" height="20" viewBox="0 0 20 20"><path d="M10 1v18M1 10h18" stroke="#f2f2f2" stroke-width="2"/></svg><div class="abs" style="left:345px;top:186px;width:1px;height:28px;background:#1c1c1c"></div><svg class="abs" style="left:360px;top:190px" width="20" height="20" viewBox="0 0 20 20"><path d="M2.500 17.500l15-15" stroke="#f2f2f2" stroke-width="2"/><path d="M11 2h7v7M9 18H2v-7" fill="none" stroke="#f2f2f2" stroke-width="2.200"/></svg>
<svg class="abs" style="left:256px;top:236px" width="18" height="20" viewBox="0 0 18 20"><path d="M4.500 1.500l8 12M13.500 1.500l-8 12" stroke="#f2f2f2" stroke-width="2.500" stroke-linecap="round"/><circle cx="4.500" cy="15.500" r="2.300" fill="none" stroke="#f2f2f2" stroke-width="1.900"/><circle cx="13.500" cy="15.500" r="2.300" fill="none" stroke="#f2f2f2" stroke-width="1.900"/></svg><svg class="abs" style="left:307px;top:235px" width="20" height="22" viewBox="0 0 20 22"><path d="M2 2.500C2 1.700 2.600 1 3.500 1h5l3.500 3.500V13H3.500c-.9 0-1.500-.7-1.500-1.500z" fill="none" stroke="#f2f2f2" stroke-width="1.900"/><path d="M8 8.500h6l4 4V19c0 .8-.6 1.500-1.500 1.500h-7c-.9 0-1.500-.7-1.500-1.500z" fill="#000" stroke="#f2f2f2" stroke-width="1.900"/></svg><svg class="abs" style="left:360px;top:235px" width="18" height="22" viewBox="0 0 18 22"><rect x="1" y="3.500" width="16" height="17.500" rx="2.500" fill="#f2f2f2"/><rect x="5" y="1" width="8" height="5" rx="1.500" fill="#f2f2f2" stroke="#000" stroke-width="1"/><rect x="4" y="9" width="10" height="8" rx="1" fill="#000"/><path d="M5.500 11.500h7M5.500 14.500h4" stroke="#f2f2f2" stroke-width="1.300"/></svg>
<!--ENDPOP--></div>
</div></body></html>
